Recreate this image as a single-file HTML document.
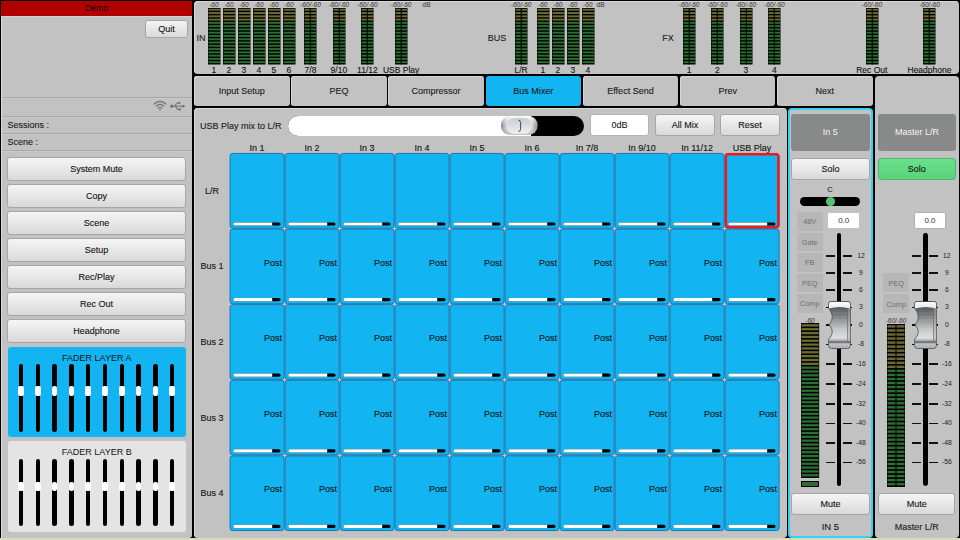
<!DOCTYPE html><html><head><meta charset="utf-8"><style>
*{margin:0;padding:0;box-sizing:border-box}
html,body{width:960px;height:540px;overflow:hidden;background:#000;font-family:"Liberation Sans", sans-serif;position:relative}
div{position:absolute}
svg{position:absolute}
.t{white-space:nowrap}
.btn{border:1px solid #a6a6a6;border-radius:3px;background:linear-gradient(#f5f5f5,#d9d9d9);text-align:center;color:#141414;white-space:nowrap;-webkit-text-stroke:0.12px #141414}
.tab{background:#c2c2c2;border-radius:3px;text-align:center;color:#1e1e1e;font-size:9px;box-shadow:inset 1px 1px 0 #d6d6d6;-webkit-text-stroke:0.12px #141414}
.cell{background:#13b4f2;border:1px solid #1a8fc4;border-radius:3px}
.bar{height:3.2px;border-radius:1.6px;background:linear-gradient(90deg,#fff 0,#fff 81%,#000 81%)}
.ml{font-size:6.5px;color:#333;text-align:center;white-space:nowrap;font-style:italic}
.lab{font-size:9px;color:#141414;text-align:center;white-space:nowrap;-webkit-text-stroke:0.12px #141414}
.sk{-webkit-text-stroke:0.05px currentColor}
</style></head><body>
<div style="left:0px;top:538px;width:960px;height:2px;background:#d9dcb9"></div>
<div style="left:1px;top:1px;width:191px;height:537px;background:#c2c2c2;box-shadow:inset 1px 0 0 #dadada;border-radius:0 0 3px 0"></div>
<div style="left:1px;top:1px;width:191px;height:15px;background:#b00000"></div>
<div class="t" style="left:1px;top:1px;width:191px;height:15px;line-height:15px;font-size:8.7px;color:#100000;text-align:center;">Demo</div>
<div style="left:1px;top:16px;width:191px;height:1px;background:#d2d2d2"></div>
<div class="btn" style="left:145px;top:19.5px;width:43px;height:18px;line-height:17px;font-size:9px;">Quit</div>
<div style="left:2px;top:97px;width:190px;height:1px;background:#a9a9a9"></div>
<div style="left:2px;top:98px;width:190px;height:1px;background:#cacaca"></div>
<div style="left:2px;top:116px;width:190px;height:1px;background:#a9a9a9"></div>
<div style="left:2px;top:117px;width:190px;height:1px;background:#cacaca"></div>
<div style="left:2px;top:133px;width:190px;height:1px;background:#a9a9a9"></div>
<div style="left:2px;top:134px;width:190px;height:1px;background:#cacaca"></div>
<div style="left:2px;top:150px;width:190px;height:1px;background:#a9a9a9"></div>
<div style="left:2px;top:151px;width:190px;height:1px;background:#cacaca"></div>
<svg style="left:150px;top:99px" width="40" height="14" viewBox="0 0 40 14">
<g fill="none" stroke="#777" stroke-linecap="round">
<path d="M4.2 5 A8 8 0 0 1 15.8 5" stroke-width="1.4"/>
<path d="M6.3 7.1 A5 5 0 0 1 13.7 7.1" stroke-width="1.4"/>
<path d="M8.2 9.1 A2.5 2.5 0 0 1 11.8 9.1" stroke-width="1.4"/>
</g>
<path d="M8.9 10.6 L11.1 10.6 L10 12.3 Z" fill="#777"/>
<g fill="#777" stroke="#777" transform="translate(0,-0.8)">
<circle cx="21.8" cy="8" r="1.7" stroke="none"/>
<path d="M22 8 H33.5" stroke-width="1.1" fill="none"/>
<path d="M35.5 8 L32.3 6.2 L32.3 9.8 Z" stroke="none"/>
<path d="M24.5 8 L27 4.8 H28.5" stroke-width="1.1" fill="none"/>
<circle cx="29.3" cy="4.7" r="1.2" stroke="none"/>
<path d="M25.5 8 L27.5 11.2 H29" stroke-width="1.1" fill="none"/>
<rect x="28.7" y="10.1" width="2.3" height="2.3" stroke="none"/>
</g>
</svg>
<div class="t" style="left:7.5px;top:117px;width:150px;height:16px;line-height:16px;font-size:9px;color:#222;text-align:left;-webkit-text-stroke:0.12px #141414">Sessions :</div>
<div class="t" style="left:7.5px;top:134px;width:150px;height:16px;line-height:16px;font-size:9px;color:#222;text-align:left;-webkit-text-stroke:0.12px #141414">Scene :</div>
<div class="btn" style="left:7.2px;top:157px;width:178.8px;height:23.5px;line-height:22.5px;font-size:9px;">System Mute</div>
<div class="btn" style="left:7.2px;top:184px;width:178.8px;height:23.5px;line-height:22.5px;font-size:9px;">Copy</div>
<div class="btn" style="left:7.2px;top:211px;width:178.8px;height:23.5px;line-height:22.5px;font-size:9px;">Scene</div>
<div class="btn" style="left:7.2px;top:238px;width:178.8px;height:23.5px;line-height:22.5px;font-size:9px;">Setup</div>
<div class="btn" style="left:7.2px;top:265px;width:178.8px;height:23.5px;line-height:22.5px;font-size:9px;">Rec/Play</div>
<div class="btn" style="left:7.2px;top:292px;width:178.8px;height:23.5px;line-height:22.5px;font-size:9px;">Rec Out</div>
<div class="btn" style="left:7.2px;top:319px;width:178.8px;height:23.5px;line-height:22.5px;font-size:9px;">Headphone</div>
<div style="left:7.5px;top:346.5px;width:178.5px;height:90.5px;background:#13b4f2;border-radius:3px"></div><div class="t" style="left:7.5px;top:352.5px;width:178.5px;height:10px;line-height:10px;font-size:9px;color:#151515;text-align:center;">FADER LAYER A</div><div style="left:18.7px;top:364px;width:4.6px;height:67.60000000000002px;background:#000;border-radius:2.3px"></div><div style="left:18.1px;top:386.4px;width:5.8px;height:9.600000000000023px;background:#fff;border-radius:2px"></div><div style="left:35.5px;top:364px;width:4.6px;height:67.60000000000002px;background:#000;border-radius:2.3px"></div><div style="left:34.9px;top:386.4px;width:5.8px;height:9.600000000000023px;background:#fff;border-radius:2px"></div><div style="left:52.300000000000004px;top:364px;width:4.6px;height:67.60000000000002px;background:#000;border-radius:2.3px"></div><div style="left:51.7px;top:386.4px;width:5.8px;height:9.600000000000023px;background:#fff;border-radius:2px"></div><div style="left:69.10000000000001px;top:364px;width:4.6px;height:67.60000000000002px;background:#000;border-radius:2.3px"></div><div style="left:68.5px;top:386.4px;width:5.8px;height:9.600000000000023px;background:#fff;border-radius:2px"></div><div style="left:85.9px;top:364px;width:4.6px;height:67.60000000000002px;background:#000;border-radius:2.3px"></div><div style="left:85.3px;top:386.4px;width:5.8px;height:9.600000000000023px;background:#fff;border-radius:2px"></div><div style="left:102.7px;top:364px;width:4.6px;height:67.60000000000002px;background:#000;border-radius:2.3px"></div><div style="left:102.1px;top:386.4px;width:5.8px;height:9.600000000000023px;background:#fff;border-radius:2px"></div><div style="left:119.50000000000001px;top:364px;width:4.6px;height:67.60000000000002px;background:#000;border-radius:2.3px"></div><div style="left:118.9px;top:386.4px;width:5.8px;height:9.600000000000023px;background:#fff;border-radius:2px"></div><div style="left:136.3px;top:364px;width:4.6px;height:67.60000000000002px;background:#000;border-radius:2.3px"></div><div style="left:135.70000000000002px;top:386.4px;width:5.8px;height:9.600000000000023px;background:#fff;border-radius:2px"></div><div style="left:153.1px;top:364px;width:4.6px;height:67.60000000000002px;background:#000;border-radius:2.3px"></div><div style="left:152.5px;top:386.4px;width:5.8px;height:9.600000000000023px;background:#fff;border-radius:2px"></div><div style="left:169.9px;top:364px;width:4.6px;height:67.60000000000002px;background:#000;border-radius:2.3px"></div><div style="left:169.3px;top:386.4px;width:5.8px;height:9.600000000000023px;background:#fff;border-radius:2px"></div>
<div style="left:7.5px;top:441px;width:178.5px;height:91px;background:#e4e4e4;border-radius:3px"></div><div class="t" style="left:7.5px;top:447px;width:178.5px;height:10px;line-height:10px;font-size:9px;color:#151515;text-align:center;">FADER LAYER B</div><div style="left:18.7px;top:458.5px;width:4.6px;height:67.20000000000005px;background:#000;border-radius:2.3px"></div><div style="left:18.1px;top:481.8px;width:5.8px;height:8.899999999999977px;background:#fff;border-radius:2px"></div><div style="left:35.5px;top:458.5px;width:4.6px;height:67.20000000000005px;background:#000;border-radius:2.3px"></div><div style="left:34.9px;top:481.8px;width:5.8px;height:8.899999999999977px;background:#fff;border-radius:2px"></div><div style="left:52.300000000000004px;top:458.5px;width:4.6px;height:67.20000000000005px;background:#000;border-radius:2.3px"></div><div style="left:51.7px;top:481.8px;width:5.8px;height:8.899999999999977px;background:#fff;border-radius:2px"></div><div style="left:69.10000000000001px;top:458.5px;width:4.6px;height:67.20000000000005px;background:#000;border-radius:2.3px"></div><div style="left:68.5px;top:481.8px;width:5.8px;height:8.899999999999977px;background:#fff;border-radius:2px"></div><div style="left:85.9px;top:458.5px;width:4.6px;height:67.20000000000005px;background:#000;border-radius:2.3px"></div><div style="left:85.3px;top:481.8px;width:5.8px;height:8.899999999999977px;background:#fff;border-radius:2px"></div><div style="left:102.7px;top:458.5px;width:4.6px;height:67.20000000000005px;background:#000;border-radius:2.3px"></div><div style="left:102.1px;top:481.8px;width:5.8px;height:8.899999999999977px;background:#fff;border-radius:2px"></div><div style="left:119.50000000000001px;top:458.5px;width:4.6px;height:67.20000000000005px;background:#000;border-radius:2.3px"></div><div style="left:118.9px;top:481.8px;width:5.8px;height:8.899999999999977px;background:#fff;border-radius:2px"></div><div style="left:136.3px;top:458.5px;width:4.6px;height:67.20000000000005px;background:#000;border-radius:2.3px"></div><div style="left:135.70000000000002px;top:481.8px;width:5.8px;height:8.899999999999977px;background:#fff;border-radius:2px"></div><div style="left:153.1px;top:458.5px;width:4.6px;height:67.20000000000005px;background:#000;border-radius:2.3px"></div><div style="left:152.5px;top:481.8px;width:5.8px;height:8.899999999999977px;background:#fff;border-radius:2px"></div><div style="left:169.9px;top:458.5px;width:4.6px;height:67.20000000000005px;background:#000;border-radius:2.3px"></div><div style="left:169.3px;top:481.8px;width:5.8px;height:8.899999999999977px;background:#fff;border-radius:2px"></div>
<div style="left:194px;top:1px;width:764.6px;height:73.3px;background:#c2c2c2;border-radius:4px;box-shadow:inset 1px 1px 0 #d8d8d8"></div>
<svg style="left:207.8px;top:8px" width="13.5" height="57.5" viewBox="0 0 13.5 57.5"><rect x="0" y="0" width="12.50" height="56.50" fill="#000"/><rect x="0.5" y="0.80" width="11.50" height="1.90" fill="#6c6b32"/><rect x="0.5" y="4.08" width="11.50" height="1.90" fill="#6c6b32"/><rect x="0.5" y="7.35" width="11.50" height="1.90" fill="#6c6b32"/><rect x="0.5" y="10.63" width="11.50" height="1.90" fill="#6c6b32"/><rect x="0.5" y="13.91" width="11.50" height="1.90" fill="#2b6e31"/><rect x="0.5" y="17.18" width="11.50" height="1.90" fill="#2b6e31"/><rect x="0.5" y="20.46" width="11.50" height="1.90" fill="#2b6e31"/><rect x="0.5" y="23.74" width="11.50" height="1.90" fill="#2b6e31"/><rect x="0.5" y="27.01" width="11.50" height="1.90" fill="#2b6e31"/><rect x="0.5" y="30.29" width="11.50" height="1.90" fill="#2b6e31"/><rect x="0.5" y="33.56" width="11.50" height="1.90" fill="#2b6e31"/><rect x="0.5" y="36.84" width="11.50" height="1.90" fill="#2b6e31"/><rect x="0.5" y="40.12" width="11.50" height="1.90" fill="#2b6e31"/><rect x="0.5" y="43.39" width="11.50" height="1.90" fill="#2b6e31"/><rect x="0.5" y="46.67" width="11.50" height="1.90" fill="#2b6e31"/><rect x="0.5" y="49.95" width="11.50" height="1.90" fill="#2b6e31"/><rect x="0.5" y="53.22" width="11.50" height="1.90" fill="#2b6e31"/></svg><div class="ml" style="left:192.8px;top:1px;width:42.2px;height:7px;line-height:7px">-60</div><div class="lab" style="left:187.8px;top:65px;width:52.2px;height:10px;line-height:10px;font-size:8.5px">1</div>
<svg style="left:222.8px;top:8px" width="13.5" height="57.5" viewBox="0 0 13.5 57.5"><rect x="0" y="0" width="12.50" height="56.50" fill="#000"/><rect x="0.5" y="0.80" width="11.50" height="1.90" fill="#6c6b32"/><rect x="0.5" y="4.08" width="11.50" height="1.90" fill="#6c6b32"/><rect x="0.5" y="7.35" width="11.50" height="1.90" fill="#6c6b32"/><rect x="0.5" y="10.63" width="11.50" height="1.90" fill="#6c6b32"/><rect x="0.5" y="13.91" width="11.50" height="1.90" fill="#2b6e31"/><rect x="0.5" y="17.18" width="11.50" height="1.90" fill="#2b6e31"/><rect x="0.5" y="20.46" width="11.50" height="1.90" fill="#2b6e31"/><rect x="0.5" y="23.74" width="11.50" height="1.90" fill="#2b6e31"/><rect x="0.5" y="27.01" width="11.50" height="1.90" fill="#2b6e31"/><rect x="0.5" y="30.29" width="11.50" height="1.90" fill="#2b6e31"/><rect x="0.5" y="33.56" width="11.50" height="1.90" fill="#2b6e31"/><rect x="0.5" y="36.84" width="11.50" height="1.90" fill="#2b6e31"/><rect x="0.5" y="40.12" width="11.50" height="1.90" fill="#2b6e31"/><rect x="0.5" y="43.39" width="11.50" height="1.90" fill="#2b6e31"/><rect x="0.5" y="46.67" width="11.50" height="1.90" fill="#2b6e31"/><rect x="0.5" y="49.95" width="11.50" height="1.90" fill="#2b6e31"/><rect x="0.5" y="53.22" width="11.50" height="1.90" fill="#2b6e31"/></svg><div class="ml" style="left:207.8px;top:1px;width:42.2px;height:7px;line-height:7px">-60</div><div class="lab" style="left:202.8px;top:65px;width:52.2px;height:10px;line-height:10px;font-size:8.5px">2</div>
<svg style="left:237.8px;top:8px" width="13.5" height="57.5" viewBox="0 0 13.5 57.5"><rect x="0" y="0" width="12.50" height="56.50" fill="#000"/><rect x="0.5" y="0.80" width="11.50" height="1.90" fill="#6c6b32"/><rect x="0.5" y="4.08" width="11.50" height="1.90" fill="#6c6b32"/><rect x="0.5" y="7.35" width="11.50" height="1.90" fill="#6c6b32"/><rect x="0.5" y="10.63" width="11.50" height="1.90" fill="#6c6b32"/><rect x="0.5" y="13.91" width="11.50" height="1.90" fill="#2b6e31"/><rect x="0.5" y="17.18" width="11.50" height="1.90" fill="#2b6e31"/><rect x="0.5" y="20.46" width="11.50" height="1.90" fill="#2b6e31"/><rect x="0.5" y="23.74" width="11.50" height="1.90" fill="#2b6e31"/><rect x="0.5" y="27.01" width="11.50" height="1.90" fill="#2b6e31"/><rect x="0.5" y="30.29" width="11.50" height="1.90" fill="#2b6e31"/><rect x="0.5" y="33.56" width="11.50" height="1.90" fill="#2b6e31"/><rect x="0.5" y="36.84" width="11.50" height="1.90" fill="#2b6e31"/><rect x="0.5" y="40.12" width="11.50" height="1.90" fill="#2b6e31"/><rect x="0.5" y="43.39" width="11.50" height="1.90" fill="#2b6e31"/><rect x="0.5" y="46.67" width="11.50" height="1.90" fill="#2b6e31"/><rect x="0.5" y="49.95" width="11.50" height="1.90" fill="#2b6e31"/><rect x="0.5" y="53.22" width="11.50" height="1.90" fill="#2b6e31"/></svg><div class="ml" style="left:222.8px;top:1px;width:42.2px;height:7px;line-height:7px">-60</div><div class="lab" style="left:217.8px;top:65px;width:52.2px;height:10px;line-height:10px;font-size:8.5px">3</div>
<svg style="left:252.8px;top:8px" width="13.5" height="57.5" viewBox="0 0 13.5 57.5"><rect x="0" y="0" width="12.50" height="56.50" fill="#000"/><rect x="0.5" y="0.80" width="11.50" height="1.90" fill="#6c6b32"/><rect x="0.5" y="4.08" width="11.50" height="1.90" fill="#6c6b32"/><rect x="0.5" y="7.35" width="11.50" height="1.90" fill="#6c6b32"/><rect x="0.5" y="10.63" width="11.50" height="1.90" fill="#6c6b32"/><rect x="0.5" y="13.91" width="11.50" height="1.90" fill="#2b6e31"/><rect x="0.5" y="17.18" width="11.50" height="1.90" fill="#2b6e31"/><rect x="0.5" y="20.46" width="11.50" height="1.90" fill="#2b6e31"/><rect x="0.5" y="23.74" width="11.50" height="1.90" fill="#2b6e31"/><rect x="0.5" y="27.01" width="11.50" height="1.90" fill="#2b6e31"/><rect x="0.5" y="30.29" width="11.50" height="1.90" fill="#2b6e31"/><rect x="0.5" y="33.56" width="11.50" height="1.90" fill="#2b6e31"/><rect x="0.5" y="36.84" width="11.50" height="1.90" fill="#2b6e31"/><rect x="0.5" y="40.12" width="11.50" height="1.90" fill="#2b6e31"/><rect x="0.5" y="43.39" width="11.50" height="1.90" fill="#2b6e31"/><rect x="0.5" y="46.67" width="11.50" height="1.90" fill="#2b6e31"/><rect x="0.5" y="49.95" width="11.50" height="1.90" fill="#2b6e31"/><rect x="0.5" y="53.22" width="11.50" height="1.90" fill="#2b6e31"/></svg><div class="ml" style="left:237.8px;top:1px;width:42.2px;height:7px;line-height:7px">-60</div><div class="lab" style="left:232.8px;top:65px;width:52.2px;height:10px;line-height:10px;font-size:8.5px">4</div>
<svg style="left:267.8px;top:8px" width="13.5" height="57.5" viewBox="0 0 13.5 57.5"><rect x="0" y="0" width="12.50" height="56.50" fill="#000"/><rect x="0.5" y="0.80" width="11.50" height="1.90" fill="#6c6b32"/><rect x="0.5" y="4.08" width="11.50" height="1.90" fill="#6c6b32"/><rect x="0.5" y="7.35" width="11.50" height="1.90" fill="#6c6b32"/><rect x="0.5" y="10.63" width="11.50" height="1.90" fill="#6c6b32"/><rect x="0.5" y="13.91" width="11.50" height="1.90" fill="#2b6e31"/><rect x="0.5" y="17.18" width="11.50" height="1.90" fill="#2b6e31"/><rect x="0.5" y="20.46" width="11.50" height="1.90" fill="#2b6e31"/><rect x="0.5" y="23.74" width="11.50" height="1.90" fill="#2b6e31"/><rect x="0.5" y="27.01" width="11.50" height="1.90" fill="#2b6e31"/><rect x="0.5" y="30.29" width="11.50" height="1.90" fill="#2b6e31"/><rect x="0.5" y="33.56" width="11.50" height="1.90" fill="#2b6e31"/><rect x="0.5" y="36.84" width="11.50" height="1.90" fill="#2b6e31"/><rect x="0.5" y="40.12" width="11.50" height="1.90" fill="#2b6e31"/><rect x="0.5" y="43.39" width="11.50" height="1.90" fill="#2b6e31"/><rect x="0.5" y="46.67" width="11.50" height="1.90" fill="#2b6e31"/><rect x="0.5" y="49.95" width="11.50" height="1.90" fill="#2b6e31"/><rect x="0.5" y="53.22" width="11.50" height="1.90" fill="#2b6e31"/></svg><div class="ml" style="left:252.8px;top:1px;width:42.2px;height:7px;line-height:7px">-60</div><div class="lab" style="left:247.8px;top:65px;width:52.2px;height:10px;line-height:10px;font-size:8.5px">5</div>
<svg style="left:282.8px;top:8px" width="13.5" height="57.5" viewBox="0 0 13.5 57.5"><rect x="0" y="0" width="12.50" height="56.50" fill="#000"/><rect x="0.5" y="0.80" width="11.50" height="1.90" fill="#6c6b32"/><rect x="0.5" y="4.08" width="11.50" height="1.90" fill="#6c6b32"/><rect x="0.5" y="7.35" width="11.50" height="1.90" fill="#6c6b32"/><rect x="0.5" y="10.63" width="11.50" height="1.90" fill="#6c6b32"/><rect x="0.5" y="13.91" width="11.50" height="1.90" fill="#2b6e31"/><rect x="0.5" y="17.18" width="11.50" height="1.90" fill="#2b6e31"/><rect x="0.5" y="20.46" width="11.50" height="1.90" fill="#2b6e31"/><rect x="0.5" y="23.74" width="11.50" height="1.90" fill="#2b6e31"/><rect x="0.5" y="27.01" width="11.50" height="1.90" fill="#2b6e31"/><rect x="0.5" y="30.29" width="11.50" height="1.90" fill="#2b6e31"/><rect x="0.5" y="33.56" width="11.50" height="1.90" fill="#2b6e31"/><rect x="0.5" y="36.84" width="11.50" height="1.90" fill="#2b6e31"/><rect x="0.5" y="40.12" width="11.50" height="1.90" fill="#2b6e31"/><rect x="0.5" y="43.39" width="11.50" height="1.90" fill="#2b6e31"/><rect x="0.5" y="46.67" width="11.50" height="1.90" fill="#2b6e31"/><rect x="0.5" y="49.95" width="11.50" height="1.90" fill="#2b6e31"/><rect x="0.5" y="53.22" width="11.50" height="1.90" fill="#2b6e31"/></svg><div class="ml" style="left:267.8px;top:1px;width:42.2px;height:7px;line-height:7px">-60</div><div class="lab" style="left:262.8px;top:65px;width:52.2px;height:10px;line-height:10px;font-size:8.5px">6</div>
<svg style="left:304.4px;top:8px" width="13.5" height="57.5" viewBox="0 0 13.5 57.5"><rect x="0" y="0" width="12.50" height="56.50" fill="#000"/><rect x="0.5" y="0.80" width="11.50" height="1.90" fill="#6c6b32"/><rect x="0.5" y="4.08" width="11.50" height="1.90" fill="#6c6b32"/><rect x="0.5" y="7.35" width="11.50" height="1.90" fill="#6c6b32"/><rect x="0.5" y="10.63" width="11.50" height="1.90" fill="#6c6b32"/><rect x="0.5" y="13.91" width="11.50" height="1.90" fill="#2b6e31"/><rect x="0.5" y="17.18" width="11.50" height="1.90" fill="#2b6e31"/><rect x="0.5" y="20.46" width="11.50" height="1.90" fill="#2b6e31"/><rect x="0.5" y="23.74" width="11.50" height="1.90" fill="#2b6e31"/><rect x="0.5" y="27.01" width="11.50" height="1.90" fill="#2b6e31"/><rect x="0.5" y="30.29" width="11.50" height="1.90" fill="#2b6e31"/><rect x="0.5" y="33.56" width="11.50" height="1.90" fill="#2b6e31"/><rect x="0.5" y="36.84" width="11.50" height="1.90" fill="#2b6e31"/><rect x="0.5" y="40.12" width="11.50" height="1.90" fill="#2b6e31"/><rect x="0.5" y="43.39" width="11.50" height="1.90" fill="#2b6e31"/><rect x="0.5" y="46.67" width="11.50" height="1.90" fill="#2b6e31"/><rect x="0.5" y="49.95" width="11.50" height="1.90" fill="#2b6e31"/><rect x="0.5" y="53.22" width="11.50" height="1.90" fill="#2b6e31"/><rect x="5.75" y="0" width="1" height="56.50" fill="#000"/></svg><div class="ml" style="left:289.4px;top:1px;width:42.2px;height:7px;line-height:7px">-60/-60</div><div class="lab" style="left:284.4px;top:65px;width:52.2px;height:10px;line-height:10px;font-size:8.5px">7/8</div>
<svg style="left:332.8px;top:8px" width="13.5" height="57.5" viewBox="0 0 13.5 57.5"><rect x="0" y="0" width="12.50" height="56.50" fill="#000"/><rect x="0.5" y="0.80" width="11.50" height="1.90" fill="#6c6b32"/><rect x="0.5" y="4.08" width="11.50" height="1.90" fill="#6c6b32"/><rect x="0.5" y="7.35" width="11.50" height="1.90" fill="#6c6b32"/><rect x="0.5" y="10.63" width="11.50" height="1.90" fill="#6c6b32"/><rect x="0.5" y="13.91" width="11.50" height="1.90" fill="#2b6e31"/><rect x="0.5" y="17.18" width="11.50" height="1.90" fill="#2b6e31"/><rect x="0.5" y="20.46" width="11.50" height="1.90" fill="#2b6e31"/><rect x="0.5" y="23.74" width="11.50" height="1.90" fill="#2b6e31"/><rect x="0.5" y="27.01" width="11.50" height="1.90" fill="#2b6e31"/><rect x="0.5" y="30.29" width="11.50" height="1.90" fill="#2b6e31"/><rect x="0.5" y="33.56" width="11.50" height="1.90" fill="#2b6e31"/><rect x="0.5" y="36.84" width="11.50" height="1.90" fill="#2b6e31"/><rect x="0.5" y="40.12" width="11.50" height="1.90" fill="#2b6e31"/><rect x="0.5" y="43.39" width="11.50" height="1.90" fill="#2b6e31"/><rect x="0.5" y="46.67" width="11.50" height="1.90" fill="#2b6e31"/><rect x="0.5" y="49.95" width="11.50" height="1.90" fill="#2b6e31"/><rect x="0.5" y="53.22" width="11.50" height="1.90" fill="#2b6e31"/><rect x="5.75" y="0" width="1" height="56.50" fill="#000"/></svg><div class="ml" style="left:317.8px;top:1px;width:42.2px;height:7px;line-height:7px">-60/-60</div><div class="lab" style="left:312.8px;top:65px;width:52.2px;height:10px;line-height:10px;font-size:8.5px">9/10</div>
<svg style="left:361.3px;top:8px" width="13.5" height="57.5" viewBox="0 0 13.5 57.5"><rect x="0" y="0" width="12.50" height="56.50" fill="#000"/><rect x="0.5" y="0.80" width="11.50" height="1.90" fill="#6c6b32"/><rect x="0.5" y="4.08" width="11.50" height="1.90" fill="#6c6b32"/><rect x="0.5" y="7.35" width="11.50" height="1.90" fill="#6c6b32"/><rect x="0.5" y="10.63" width="11.50" height="1.90" fill="#6c6b32"/><rect x="0.5" y="13.91" width="11.50" height="1.90" fill="#2b6e31"/><rect x="0.5" y="17.18" width="11.50" height="1.90" fill="#2b6e31"/><rect x="0.5" y="20.46" width="11.50" height="1.90" fill="#2b6e31"/><rect x="0.5" y="23.74" width="11.50" height="1.90" fill="#2b6e31"/><rect x="0.5" y="27.01" width="11.50" height="1.90" fill="#2b6e31"/><rect x="0.5" y="30.29" width="11.50" height="1.90" fill="#2b6e31"/><rect x="0.5" y="33.56" width="11.50" height="1.90" fill="#2b6e31"/><rect x="0.5" y="36.84" width="11.50" height="1.90" fill="#2b6e31"/><rect x="0.5" y="40.12" width="11.50" height="1.90" fill="#2b6e31"/><rect x="0.5" y="43.39" width="11.50" height="1.90" fill="#2b6e31"/><rect x="0.5" y="46.67" width="11.50" height="1.90" fill="#2b6e31"/><rect x="0.5" y="49.95" width="11.50" height="1.90" fill="#2b6e31"/><rect x="0.5" y="53.22" width="11.50" height="1.90" fill="#2b6e31"/><rect x="5.75" y="0" width="1" height="56.50" fill="#000"/></svg><div class="ml" style="left:346.3px;top:1px;width:42.2px;height:7px;line-height:7px">-60/-60</div><div class="lab" style="left:341.3px;top:65px;width:52.2px;height:10px;line-height:10px;font-size:8.5px">11/12</div>
<svg style="left:395px;top:8px" width="13.5" height="57.5" viewBox="0 0 13.5 57.5"><rect x="0" y="0" width="12.50" height="56.50" fill="#000"/><rect x="0.5" y="0.80" width="11.50" height="1.90" fill="#6c6b32"/><rect x="0.5" y="4.08" width="11.50" height="1.90" fill="#6c6b32"/><rect x="0.5" y="7.35" width="11.50" height="1.90" fill="#6c6b32"/><rect x="0.5" y="10.63" width="11.50" height="1.90" fill="#6c6b32"/><rect x="0.5" y="13.91" width="11.50" height="1.90" fill="#2b6e31"/><rect x="0.5" y="17.18" width="11.50" height="1.90" fill="#2b6e31"/><rect x="0.5" y="20.46" width="11.50" height="1.90" fill="#2b6e31"/><rect x="0.5" y="23.74" width="11.50" height="1.90" fill="#2b6e31"/><rect x="0.5" y="27.01" width="11.50" height="1.90" fill="#2b6e31"/><rect x="0.5" y="30.29" width="11.50" height="1.90" fill="#2b6e31"/><rect x="0.5" y="33.56" width="11.50" height="1.90" fill="#2b6e31"/><rect x="0.5" y="36.84" width="11.50" height="1.90" fill="#2b6e31"/><rect x="0.5" y="40.12" width="11.50" height="1.90" fill="#2b6e31"/><rect x="0.5" y="43.39" width="11.50" height="1.90" fill="#2b6e31"/><rect x="0.5" y="46.67" width="11.50" height="1.90" fill="#2b6e31"/><rect x="0.5" y="49.95" width="11.50" height="1.90" fill="#2b6e31"/><rect x="0.5" y="53.22" width="11.50" height="1.90" fill="#2b6e31"/><rect x="5.75" y="0" width="1" height="56.50" fill="#000"/></svg><div class="ml" style="left:380px;top:1px;width:42.2px;height:7px;line-height:7px">-60/-60</div><div class="lab" style="left:375px;top:65px;width:52.2px;height:10px;line-height:10px;font-size:8.5px">USB Play</div>
<div class="t" style="left:419px;top:1px;width:15px;height:7px;line-height:7px;font-size:6.5px;color:#333;text-align:center;">dB</div>
<div class="t" style="left:194px;top:32px;width:14px;height:12px;line-height:12px;font-size:9px;color:#1e1e1e;text-align:center;-webkit-text-stroke:0.12px #141414">IN</div>
<div class="t" style="left:484px;top:32px;width:26px;height:12px;line-height:12px;font-size:9px;color:#1e1e1e;text-align:center;-webkit-text-stroke:0.12px #141414">BUS</div>
<svg style="left:515px;top:8px" width="13.5" height="57.5" viewBox="0 0 13.5 57.5"><rect x="0" y="0" width="12.50" height="56.50" fill="#000"/><rect x="0.5" y="0.80" width="11.50" height="1.90" fill="#6c6b32"/><rect x="0.5" y="4.08" width="11.50" height="1.90" fill="#6c6b32"/><rect x="0.5" y="7.35" width="11.50" height="1.90" fill="#6c6b32"/><rect x="0.5" y="10.63" width="11.50" height="1.90" fill="#6c6b32"/><rect x="0.5" y="13.91" width="11.50" height="1.90" fill="#2b6e31"/><rect x="0.5" y="17.18" width="11.50" height="1.90" fill="#2b6e31"/><rect x="0.5" y="20.46" width="11.50" height="1.90" fill="#2b6e31"/><rect x="0.5" y="23.74" width="11.50" height="1.90" fill="#2b6e31"/><rect x="0.5" y="27.01" width="11.50" height="1.90" fill="#2b6e31"/><rect x="0.5" y="30.29" width="11.50" height="1.90" fill="#2b6e31"/><rect x="0.5" y="33.56" width="11.50" height="1.90" fill="#2b6e31"/><rect x="0.5" y="36.84" width="11.50" height="1.90" fill="#2b6e31"/><rect x="0.5" y="40.12" width="11.50" height="1.90" fill="#2b6e31"/><rect x="0.5" y="43.39" width="11.50" height="1.90" fill="#2b6e31"/><rect x="0.5" y="46.67" width="11.50" height="1.90" fill="#2b6e31"/><rect x="0.5" y="49.95" width="11.50" height="1.90" fill="#2b6e31"/><rect x="0.5" y="53.22" width="11.50" height="1.90" fill="#2b6e31"/><rect x="5.75" y="0" width="1" height="56.50" fill="#000"/></svg><div class="ml" style="left:500px;top:1px;width:42.2px;height:7px;line-height:7px">-60/-60</div><div class="lab" style="left:495px;top:65px;width:52.2px;height:10px;line-height:10px;font-size:8.5px">L/R</div>
<svg style="left:536.7px;top:8px" width="13.5" height="57.5" viewBox="0 0 13.5 57.5"><rect x="0" y="0" width="12.50" height="56.50" fill="#000"/><rect x="0.5" y="0.80" width="11.50" height="1.90" fill="#6c6b32"/><rect x="0.5" y="4.08" width="11.50" height="1.90" fill="#6c6b32"/><rect x="0.5" y="7.35" width="11.50" height="1.90" fill="#6c6b32"/><rect x="0.5" y="10.63" width="11.50" height="1.90" fill="#6c6b32"/><rect x="0.5" y="13.91" width="11.50" height="1.90" fill="#2b6e31"/><rect x="0.5" y="17.18" width="11.50" height="1.90" fill="#2b6e31"/><rect x="0.5" y="20.46" width="11.50" height="1.90" fill="#2b6e31"/><rect x="0.5" y="23.74" width="11.50" height="1.90" fill="#2b6e31"/><rect x="0.5" y="27.01" width="11.50" height="1.90" fill="#2b6e31"/><rect x="0.5" y="30.29" width="11.50" height="1.90" fill="#2b6e31"/><rect x="0.5" y="33.56" width="11.50" height="1.90" fill="#2b6e31"/><rect x="0.5" y="36.84" width="11.50" height="1.90" fill="#2b6e31"/><rect x="0.5" y="40.12" width="11.50" height="1.90" fill="#2b6e31"/><rect x="0.5" y="43.39" width="11.50" height="1.90" fill="#2b6e31"/><rect x="0.5" y="46.67" width="11.50" height="1.90" fill="#2b6e31"/><rect x="0.5" y="49.95" width="11.50" height="1.90" fill="#2b6e31"/><rect x="0.5" y="53.22" width="11.50" height="1.90" fill="#2b6e31"/></svg><div class="ml" style="left:521.7px;top:1px;width:42.2px;height:7px;line-height:7px">-60</div><div class="lab" style="left:516.7px;top:65px;width:52.2px;height:10px;line-height:10px;font-size:8.5px">1</div>
<svg style="left:551.7px;top:8px" width="13.5" height="57.5" viewBox="0 0 13.5 57.5"><rect x="0" y="0" width="12.50" height="56.50" fill="#000"/><rect x="0.5" y="0.80" width="11.50" height="1.90" fill="#6c6b32"/><rect x="0.5" y="4.08" width="11.50" height="1.90" fill="#6c6b32"/><rect x="0.5" y="7.35" width="11.50" height="1.90" fill="#6c6b32"/><rect x="0.5" y="10.63" width="11.50" height="1.90" fill="#6c6b32"/><rect x="0.5" y="13.91" width="11.50" height="1.90" fill="#2b6e31"/><rect x="0.5" y="17.18" width="11.50" height="1.90" fill="#2b6e31"/><rect x="0.5" y="20.46" width="11.50" height="1.90" fill="#2b6e31"/><rect x="0.5" y="23.74" width="11.50" height="1.90" fill="#2b6e31"/><rect x="0.5" y="27.01" width="11.50" height="1.90" fill="#2b6e31"/><rect x="0.5" y="30.29" width="11.50" height="1.90" fill="#2b6e31"/><rect x="0.5" y="33.56" width="11.50" height="1.90" fill="#2b6e31"/><rect x="0.5" y="36.84" width="11.50" height="1.90" fill="#2b6e31"/><rect x="0.5" y="40.12" width="11.50" height="1.90" fill="#2b6e31"/><rect x="0.5" y="43.39" width="11.50" height="1.90" fill="#2b6e31"/><rect x="0.5" y="46.67" width="11.50" height="1.90" fill="#2b6e31"/><rect x="0.5" y="49.95" width="11.50" height="1.90" fill="#2b6e31"/><rect x="0.5" y="53.22" width="11.50" height="1.90" fill="#2b6e31"/></svg><div class="ml" style="left:536.7px;top:1px;width:42.2px;height:7px;line-height:7px">-60</div><div class="lab" style="left:531.7px;top:65px;width:52.2px;height:10px;line-height:10px;font-size:8.5px">2</div>
<svg style="left:566.7px;top:8px" width="13.5" height="57.5" viewBox="0 0 13.5 57.5"><rect x="0" y="0" width="12.50" height="56.50" fill="#000"/><rect x="0.5" y="0.80" width="11.50" height="1.90" fill="#6c6b32"/><rect x="0.5" y="4.08" width="11.50" height="1.90" fill="#6c6b32"/><rect x="0.5" y="7.35" width="11.50" height="1.90" fill="#6c6b32"/><rect x="0.5" y="10.63" width="11.50" height="1.90" fill="#6c6b32"/><rect x="0.5" y="13.91" width="11.50" height="1.90" fill="#2b6e31"/><rect x="0.5" y="17.18" width="11.50" height="1.90" fill="#2b6e31"/><rect x="0.5" y="20.46" width="11.50" height="1.90" fill="#2b6e31"/><rect x="0.5" y="23.74" width="11.50" height="1.90" fill="#2b6e31"/><rect x="0.5" y="27.01" width="11.50" height="1.90" fill="#2b6e31"/><rect x="0.5" y="30.29" width="11.50" height="1.90" fill="#2b6e31"/><rect x="0.5" y="33.56" width="11.50" height="1.90" fill="#2b6e31"/><rect x="0.5" y="36.84" width="11.50" height="1.90" fill="#2b6e31"/><rect x="0.5" y="40.12" width="11.50" height="1.90" fill="#2b6e31"/><rect x="0.5" y="43.39" width="11.50" height="1.90" fill="#2b6e31"/><rect x="0.5" y="46.67" width="11.50" height="1.90" fill="#2b6e31"/><rect x="0.5" y="49.95" width="11.50" height="1.90" fill="#2b6e31"/><rect x="0.5" y="53.22" width="11.50" height="1.90" fill="#2b6e31"/></svg><div class="ml" style="left:551.7px;top:1px;width:42.2px;height:7px;line-height:7px">-60</div><div class="lab" style="left:546.7px;top:65px;width:52.2px;height:10px;line-height:10px;font-size:8.5px">3</div>
<svg style="left:581.7px;top:8px" width="13.5" height="57.5" viewBox="0 0 13.5 57.5"><rect x="0" y="0" width="12.50" height="56.50" fill="#000"/><rect x="0.5" y="0.80" width="11.50" height="1.90" fill="#6c6b32"/><rect x="0.5" y="4.08" width="11.50" height="1.90" fill="#6c6b32"/><rect x="0.5" y="7.35" width="11.50" height="1.90" fill="#6c6b32"/><rect x="0.5" y="10.63" width="11.50" height="1.90" fill="#6c6b32"/><rect x="0.5" y="13.91" width="11.50" height="1.90" fill="#2b6e31"/><rect x="0.5" y="17.18" width="11.50" height="1.90" fill="#2b6e31"/><rect x="0.5" y="20.46" width="11.50" height="1.90" fill="#2b6e31"/><rect x="0.5" y="23.74" width="11.50" height="1.90" fill="#2b6e31"/><rect x="0.5" y="27.01" width="11.50" height="1.90" fill="#2b6e31"/><rect x="0.5" y="30.29" width="11.50" height="1.90" fill="#2b6e31"/><rect x="0.5" y="33.56" width="11.50" height="1.90" fill="#2b6e31"/><rect x="0.5" y="36.84" width="11.50" height="1.90" fill="#2b6e31"/><rect x="0.5" y="40.12" width="11.50" height="1.90" fill="#2b6e31"/><rect x="0.5" y="43.39" width="11.50" height="1.90" fill="#2b6e31"/><rect x="0.5" y="46.67" width="11.50" height="1.90" fill="#2b6e31"/><rect x="0.5" y="49.95" width="11.50" height="1.90" fill="#2b6e31"/><rect x="0.5" y="53.22" width="11.50" height="1.90" fill="#2b6e31"/></svg><div class="ml" style="left:566.7px;top:1px;width:42.2px;height:7px;line-height:7px">-60</div><div class="lab" style="left:561.7px;top:65px;width:52.2px;height:10px;line-height:10px;font-size:8.5px">4</div>
<div class="t" style="left:593px;top:1px;width:15px;height:7px;line-height:7px;font-size:6.5px;color:#333;text-align:center;">dB</div>
<div class="t" style="left:660px;top:32px;width:16px;height:12px;line-height:12px;font-size:9px;color:#1e1e1e;text-align:center;-webkit-text-stroke:0.12px #141414">FX</div>
<svg style="left:683px;top:8px" width="13.5" height="57.5" viewBox="0 0 13.5 57.5"><rect x="0" y="0" width="12.50" height="56.50" fill="#000"/><rect x="0.5" y="0.80" width="11.50" height="1.90" fill="#6c6b32"/><rect x="0.5" y="4.08" width="11.50" height="1.90" fill="#6c6b32"/><rect x="0.5" y="7.35" width="11.50" height="1.90" fill="#6c6b32"/><rect x="0.5" y="10.63" width="11.50" height="1.90" fill="#6c6b32"/><rect x="0.5" y="13.91" width="11.50" height="1.90" fill="#2b6e31"/><rect x="0.5" y="17.18" width="11.50" height="1.90" fill="#2b6e31"/><rect x="0.5" y="20.46" width="11.50" height="1.90" fill="#2b6e31"/><rect x="0.5" y="23.74" width="11.50" height="1.90" fill="#2b6e31"/><rect x="0.5" y="27.01" width="11.50" height="1.90" fill="#2b6e31"/><rect x="0.5" y="30.29" width="11.50" height="1.90" fill="#2b6e31"/><rect x="0.5" y="33.56" width="11.50" height="1.90" fill="#2b6e31"/><rect x="0.5" y="36.84" width="11.50" height="1.90" fill="#2b6e31"/><rect x="0.5" y="40.12" width="11.50" height="1.90" fill="#2b6e31"/><rect x="0.5" y="43.39" width="11.50" height="1.90" fill="#2b6e31"/><rect x="0.5" y="46.67" width="11.50" height="1.90" fill="#2b6e31"/><rect x="0.5" y="49.95" width="11.50" height="1.90" fill="#2b6e31"/><rect x="0.5" y="53.22" width="11.50" height="1.90" fill="#2b6e31"/><rect x="5.75" y="0" width="1" height="56.50" fill="#000"/></svg><div class="ml" style="left:668px;top:1px;width:42.2px;height:7px;line-height:7px">-60/-60</div><div class="lab" style="left:663px;top:65px;width:52.2px;height:10px;line-height:10px;font-size:8.5px">1</div>
<svg style="left:711.2px;top:8px" width="13.5" height="57.5" viewBox="0 0 13.5 57.5"><rect x="0" y="0" width="12.50" height="56.50" fill="#000"/><rect x="0.5" y="0.80" width="11.50" height="1.90" fill="#6c6b32"/><rect x="0.5" y="4.08" width="11.50" height="1.90" fill="#6c6b32"/><rect x="0.5" y="7.35" width="11.50" height="1.90" fill="#6c6b32"/><rect x="0.5" y="10.63" width="11.50" height="1.90" fill="#6c6b32"/><rect x="0.5" y="13.91" width="11.50" height="1.90" fill="#2b6e31"/><rect x="0.5" y="17.18" width="11.50" height="1.90" fill="#2b6e31"/><rect x="0.5" y="20.46" width="11.50" height="1.90" fill="#2b6e31"/><rect x="0.5" y="23.74" width="11.50" height="1.90" fill="#2b6e31"/><rect x="0.5" y="27.01" width="11.50" height="1.90" fill="#2b6e31"/><rect x="0.5" y="30.29" width="11.50" height="1.90" fill="#2b6e31"/><rect x="0.5" y="33.56" width="11.50" height="1.90" fill="#2b6e31"/><rect x="0.5" y="36.84" width="11.50" height="1.90" fill="#2b6e31"/><rect x="0.5" y="40.12" width="11.50" height="1.90" fill="#2b6e31"/><rect x="0.5" y="43.39" width="11.50" height="1.90" fill="#2b6e31"/><rect x="0.5" y="46.67" width="11.50" height="1.90" fill="#2b6e31"/><rect x="0.5" y="49.95" width="11.50" height="1.90" fill="#2b6e31"/><rect x="0.5" y="53.22" width="11.50" height="1.90" fill="#2b6e31"/><rect x="5.75" y="0" width="1" height="56.50" fill="#000"/></svg><div class="ml" style="left:696.2px;top:1px;width:42.2px;height:7px;line-height:7px">-60/-60</div><div class="lab" style="left:691.2px;top:65px;width:52.2px;height:10px;line-height:10px;font-size:8.5px">2</div>
<svg style="left:739.8px;top:8px" width="13.5" height="57.5" viewBox="0 0 13.5 57.5"><rect x="0" y="0" width="12.50" height="56.50" fill="#000"/><rect x="0.5" y="0.80" width="11.50" height="1.90" fill="#6c6b32"/><rect x="0.5" y="4.08" width="11.50" height="1.90" fill="#6c6b32"/><rect x="0.5" y="7.35" width="11.50" height="1.90" fill="#6c6b32"/><rect x="0.5" y="10.63" width="11.50" height="1.90" fill="#6c6b32"/><rect x="0.5" y="13.91" width="11.50" height="1.90" fill="#2b6e31"/><rect x="0.5" y="17.18" width="11.50" height="1.90" fill="#2b6e31"/><rect x="0.5" y="20.46" width="11.50" height="1.90" fill="#2b6e31"/><rect x="0.5" y="23.74" width="11.50" height="1.90" fill="#2b6e31"/><rect x="0.5" y="27.01" width="11.50" height="1.90" fill="#2b6e31"/><rect x="0.5" y="30.29" width="11.50" height="1.90" fill="#2b6e31"/><rect x="0.5" y="33.56" width="11.50" height="1.90" fill="#2b6e31"/><rect x="0.5" y="36.84" width="11.50" height="1.90" fill="#2b6e31"/><rect x="0.5" y="40.12" width="11.50" height="1.90" fill="#2b6e31"/><rect x="0.5" y="43.39" width="11.50" height="1.90" fill="#2b6e31"/><rect x="0.5" y="46.67" width="11.50" height="1.90" fill="#2b6e31"/><rect x="0.5" y="49.95" width="11.50" height="1.90" fill="#2b6e31"/><rect x="0.5" y="53.22" width="11.50" height="1.90" fill="#2b6e31"/><rect x="5.75" y="0" width="1" height="56.50" fill="#000"/></svg><div class="ml" style="left:724.8px;top:1px;width:42.2px;height:7px;line-height:7px">-60/-60</div><div class="lab" style="left:719.8px;top:65px;width:52.2px;height:10px;line-height:10px;font-size:8.5px">3</div>
<svg style="left:768.3px;top:8px" width="13.5" height="57.5" viewBox="0 0 13.5 57.5"><rect x="0" y="0" width="12.50" height="56.50" fill="#000"/><rect x="0.5" y="0.80" width="11.50" height="1.90" fill="#6c6b32"/><rect x="0.5" y="4.08" width="11.50" height="1.90" fill="#6c6b32"/><rect x="0.5" y="7.35" width="11.50" height="1.90" fill="#6c6b32"/><rect x="0.5" y="10.63" width="11.50" height="1.90" fill="#6c6b32"/><rect x="0.5" y="13.91" width="11.50" height="1.90" fill="#2b6e31"/><rect x="0.5" y="17.18" width="11.50" height="1.90" fill="#2b6e31"/><rect x="0.5" y="20.46" width="11.50" height="1.90" fill="#2b6e31"/><rect x="0.5" y="23.74" width="11.50" height="1.90" fill="#2b6e31"/><rect x="0.5" y="27.01" width="11.50" height="1.90" fill="#2b6e31"/><rect x="0.5" y="30.29" width="11.50" height="1.90" fill="#2b6e31"/><rect x="0.5" y="33.56" width="11.50" height="1.90" fill="#2b6e31"/><rect x="0.5" y="36.84" width="11.50" height="1.90" fill="#2b6e31"/><rect x="0.5" y="40.12" width="11.50" height="1.90" fill="#2b6e31"/><rect x="0.5" y="43.39" width="11.50" height="1.90" fill="#2b6e31"/><rect x="0.5" y="46.67" width="11.50" height="1.90" fill="#2b6e31"/><rect x="0.5" y="49.95" width="11.50" height="1.90" fill="#2b6e31"/><rect x="0.5" y="53.22" width="11.50" height="1.90" fill="#2b6e31"/><rect x="5.75" y="0" width="1" height="56.50" fill="#000"/></svg><div class="ml" style="left:753.3px;top:1px;width:42.2px;height:7px;line-height:7px">-60/-60</div><div class="lab" style="left:748.3px;top:65px;width:52.2px;height:10px;line-height:10px;font-size:8.5px">4</div>
<svg style="left:865.7px;top:8px" width="13.5" height="57.5" viewBox="0 0 13.5 57.5"><rect x="0" y="0" width="12.50" height="56.50" fill="#000"/><rect x="0.5" y="0.80" width="11.50" height="1.90" fill="#6c6b32"/><rect x="0.5" y="4.08" width="11.50" height="1.90" fill="#6c6b32"/><rect x="0.5" y="7.35" width="11.50" height="1.90" fill="#6c6b32"/><rect x="0.5" y="10.63" width="11.50" height="1.90" fill="#6c6b32"/><rect x="0.5" y="13.91" width="11.50" height="1.90" fill="#2b6e31"/><rect x="0.5" y="17.18" width="11.50" height="1.90" fill="#2b6e31"/><rect x="0.5" y="20.46" width="11.50" height="1.90" fill="#2b6e31"/><rect x="0.5" y="23.74" width="11.50" height="1.90" fill="#2b6e31"/><rect x="0.5" y="27.01" width="11.50" height="1.90" fill="#2b6e31"/><rect x="0.5" y="30.29" width="11.50" height="1.90" fill="#2b6e31"/><rect x="0.5" y="33.56" width="11.50" height="1.90" fill="#2b6e31"/><rect x="0.5" y="36.84" width="11.50" height="1.90" fill="#2b6e31"/><rect x="0.5" y="40.12" width="11.50" height="1.90" fill="#2b6e31"/><rect x="0.5" y="43.39" width="11.50" height="1.90" fill="#2b6e31"/><rect x="0.5" y="46.67" width="11.50" height="1.90" fill="#2b6e31"/><rect x="0.5" y="49.95" width="11.50" height="1.90" fill="#2b6e31"/><rect x="0.5" y="53.22" width="11.50" height="1.90" fill="#2b6e31"/><rect x="5.75" y="0" width="1" height="56.50" fill="#000"/></svg><div class="ml" style="left:850.7px;top:1px;width:42.2px;height:7px;line-height:7px">-60/-60</div><div class="lab" style="left:845.7px;top:65px;width:52.2px;height:10px;line-height:10px;font-size:8.5px">Rec Out</div>
<svg style="left:923.4px;top:8px" width="13.5" height="57.5" viewBox="0 0 13.5 57.5"><rect x="0" y="0" width="12.50" height="56.50" fill="#000"/><rect x="0.5" y="0.80" width="11.50" height="1.90" fill="#6c6b32"/><rect x="0.5" y="4.08" width="11.50" height="1.90" fill="#6c6b32"/><rect x="0.5" y="7.35" width="11.50" height="1.90" fill="#6c6b32"/><rect x="0.5" y="10.63" width="11.50" height="1.90" fill="#6c6b32"/><rect x="0.5" y="13.91" width="11.50" height="1.90" fill="#2b6e31"/><rect x="0.5" y="17.18" width="11.50" height="1.90" fill="#2b6e31"/><rect x="0.5" y="20.46" width="11.50" height="1.90" fill="#2b6e31"/><rect x="0.5" y="23.74" width="11.50" height="1.90" fill="#2b6e31"/><rect x="0.5" y="27.01" width="11.50" height="1.90" fill="#2b6e31"/><rect x="0.5" y="30.29" width="11.50" height="1.90" fill="#2b6e31"/><rect x="0.5" y="33.56" width="11.50" height="1.90" fill="#2b6e31"/><rect x="0.5" y="36.84" width="11.50" height="1.90" fill="#2b6e31"/><rect x="0.5" y="40.12" width="11.50" height="1.90" fill="#2b6e31"/><rect x="0.5" y="43.39" width="11.50" height="1.90" fill="#2b6e31"/><rect x="0.5" y="46.67" width="11.50" height="1.90" fill="#2b6e31"/><rect x="0.5" y="49.95" width="11.50" height="1.90" fill="#2b6e31"/><rect x="0.5" y="53.22" width="11.50" height="1.90" fill="#2b6e31"/><rect x="5.75" y="0" width="1" height="56.50" fill="#000"/></svg><div class="ml" style="left:908.4px;top:1px;width:42.2px;height:7px;line-height:7px">-60/-60</div><div class="lab" style="left:903.4px;top:65px;width:52.2px;height:10px;line-height:10px;font-size:8.5px">Headphone</div>
<div class="tab" style="left:194.00px;top:76px;width:95.6px;height:30px;line-height:30px">Input Setup</div>
<div class="tab" style="left:291.17px;top:76px;width:95.6px;height:30px;line-height:30px">PEQ</div>
<div class="tab" style="left:388.34px;top:76px;width:95.6px;height:30px;line-height:30px">Compressor</div>
<div class="tab" style="left:485.51px;top:76px;width:95.6px;height:30px;line-height:30px;background:#13b4f2;box-shadow:none">Bus Mixer</div>
<div class="tab" style="left:582.68px;top:76px;width:95.6px;height:30px;line-height:30px">Effect Send</div>
<div class="tab" style="left:679.85px;top:76px;width:95.6px;height:30px;line-height:30px">Prev</div>
<div class="tab" style="left:777.02px;top:76px;width:95.6px;height:30px;line-height:30px">Next</div>
<div style="left:194px;top:107.6px;width:592.5px;height:430px;background:#c2c2c2;border-radius:4px;box-shadow:inset 1px 1px 0 #d8d8d8"></div>
<div class="t" style="left:200px;top:116px;width:90px;height:20px;line-height:20px;font-size:9px;color:#1e1e1e;text-align:left;-webkit-text-stroke:0.12px #141414">USB Play mix to L/R</div>
<div style="left:287.8px;top:115.5px;width:296px;height:20px;background:#000;border-radius:10px"></div>
<div style="left:287.8px;top:115.5px;width:243px;height:20px;background:#fff;border-radius:10px 0 0 10px"></div>
<svg style="left:500px;top:115px" width="39" height="22" viewBox="0 0 39 22">
<defs><linearGradient id="kh" x1="0" y1="0" x2="1" y2="0"><stop offset="0" stop-color="#7f878e"/><stop offset="0.14" stop-color="#c9ced2"/><stop offset="0.3" stop-color="#f4f5f6"/><stop offset="0.7" stop-color="#f4f5f6"/><stop offset="0.86" stop-color="#c9ced2"/><stop offset="1" stop-color="#7f878e"/></linearGradient>
<linearGradient id="kv" x1="0" y1="0" x2="0" y2="1"><stop offset="0" stop-color="#ffffff" stop-opacity="0.6"/><stop offset="0.5" stop-color="#ffffff" stop-opacity="0"/><stop offset="1" stop-color="#5a6168" stop-opacity="0.35"/></linearGradient>
<linearGradient id="ki" x1="0" y1="0" x2="0" y2="1"><stop offset="0" stop-color="#c8cdd2"/><stop offset="1" stop-color="#eef0f2"/></linearGradient></defs>
<rect x="0.8" y="1" width="37" height="19" rx="9.5" fill="url(#kh)"/>
<rect x="0.8" y="1" width="37" height="19" rx="9.5" fill="url(#kv)"/>
<rect x="6.4" y="2.8" width="25.6" height="16" rx="8" fill="url(#ki)"/>
<path d="M18.4 5.2 Q20.6 5.2 20.6 7.4 V14.2 Q20.6 16.4 18.4 16.4" fill="none" stroke="#3c3c3c" stroke-width="0.9"/>
</svg>
<div class="sk" style="left:590px;top:114px;width:59px;height:22px;background:#fff;border:1px solid #b4b4b4;border-radius:3px;text-align:center;line-height:20.5px;font-size:9px;color:#111">0dB</div>
<div class="btn" style="left:655px;top:114px;width:60px;height:22px;line-height:21px;font-size:9px;">All Mix</div>
<div class="btn" style="left:720px;top:114px;width:60px;height:22px;line-height:21px;font-size:9px;">Reset</div>
<div class="lab" style="left:229.6px;top:142px;width:55.0px;height:12px;line-height:12px">In 1</div>
<div class="lab" style="left:284.6px;top:142px;width:55.0px;height:12px;line-height:12px">In 2</div>
<div class="lab" style="left:339.6px;top:142px;width:55.0px;height:12px;line-height:12px">In 3</div>
<div class="lab" style="left:394.6px;top:142px;width:55.0px;height:12px;line-height:12px">In 4</div>
<div class="lab" style="left:449.6px;top:142px;width:55.0px;height:12px;line-height:12px">In 5</div>
<div class="lab" style="left:504.6px;top:142px;width:55.0px;height:12px;line-height:12px">In 6</div>
<div class="lab" style="left:559.6px;top:142px;width:55.0px;height:12px;line-height:12px">In 7/8</div>
<div class="lab" style="left:614.6px;top:142px;width:55.0px;height:12px;line-height:12px">In 9/10</div>
<div class="lab" style="left:669.6px;top:142px;width:55.0px;height:12px;line-height:12px">In 11/12</div>
<div class="lab" style="left:724.6px;top:142px;width:55.0px;height:12px;line-height:12px">USB Play</div>
<svg style="left:0px;top:0px" width="960" height="540" viewBox="0 0 960 540"><rect x="230.05" y="153.45" width="54.10" height="74.70" rx="2.6" fill="#13b4f2" stroke="#176fa8" stroke-width="0.9"/><rect x="233.30" y="222.40" width="47.2" height="3.2" rx="1.6" fill="#000"/><path d="M234.90 222.40 H272.20 V225.60 H234.90 A1.6 1.6 0 0 1 234.90 222.40 Z" fill="#fff"/><rect x="285.05" y="153.45" width="54.10" height="74.70" rx="2.6" fill="#13b4f2" stroke="#176fa8" stroke-width="0.9"/><rect x="288.30" y="222.40" width="47.2" height="3.2" rx="1.6" fill="#000"/><path d="M289.90 222.40 H327.20 V225.60 H289.90 A1.6 1.6 0 0 1 289.90 222.40 Z" fill="#fff"/><rect x="340.05" y="153.45" width="54.10" height="74.70" rx="2.6" fill="#13b4f2" stroke="#176fa8" stroke-width="0.9"/><rect x="343.30" y="222.40" width="47.2" height="3.2" rx="1.6" fill="#000"/><path d="M344.90 222.40 H382.20 V225.60 H344.90 A1.6 1.6 0 0 1 344.90 222.40 Z" fill="#fff"/><rect x="395.05" y="153.45" width="54.10" height="74.70" rx="2.6" fill="#13b4f2" stroke="#176fa8" stroke-width="0.9"/><rect x="398.30" y="222.40" width="47.2" height="3.2" rx="1.6" fill="#000"/><path d="M399.90 222.40 H437.20 V225.60 H399.90 A1.6 1.6 0 0 1 399.90 222.40 Z" fill="#fff"/><rect x="450.05" y="153.45" width="54.10" height="74.70" rx="2.6" fill="#13b4f2" stroke="#176fa8" stroke-width="0.9"/><rect x="453.30" y="222.40" width="47.2" height="3.2" rx="1.6" fill="#000"/><path d="M454.90 222.40 H492.20 V225.60 H454.90 A1.6 1.6 0 0 1 454.90 222.40 Z" fill="#fff"/><rect x="505.05" y="153.45" width="54.10" height="74.70" rx="2.6" fill="#13b4f2" stroke="#176fa8" stroke-width="0.9"/><rect x="508.30" y="222.40" width="47.2" height="3.2" rx="1.6" fill="#000"/><path d="M509.90 222.40 H547.20 V225.60 H509.90 A1.6 1.6 0 0 1 509.90 222.40 Z" fill="#fff"/><rect x="560.05" y="153.45" width="54.10" height="74.70" rx="2.6" fill="#13b4f2" stroke="#176fa8" stroke-width="0.9"/><rect x="563.30" y="222.40" width="47.2" height="3.2" rx="1.6" fill="#000"/><path d="M564.90 222.40 H602.20 V225.60 H564.90 A1.6 1.6 0 0 1 564.90 222.40 Z" fill="#fff"/><rect x="615.05" y="153.45" width="54.10" height="74.70" rx="2.6" fill="#13b4f2" stroke="#176fa8" stroke-width="0.9"/><rect x="618.30" y="222.40" width="47.2" height="3.2" rx="1.6" fill="#000"/><path d="M619.90 222.40 H657.20 V225.60 H619.90 A1.6 1.6 0 0 1 619.90 222.40 Z" fill="#fff"/><rect x="670.05" y="153.45" width="54.10" height="74.70" rx="2.6" fill="#13b4f2" stroke="#176fa8" stroke-width="0.9"/><rect x="673.30" y="222.40" width="47.2" height="3.2" rx="1.6" fill="#000"/><path d="M674.90 222.40 H712.20 V225.60 H674.90 A1.6 1.6 0 0 1 674.90 222.40 Z" fill="#fff"/><rect x="725.05" y="153.45" width="54.10" height="74.70" rx="2.6" fill="#13b4f2" stroke="#176fa8" stroke-width="0.9"/><rect x="728.30" y="222.40" width="47.2" height="3.2" rx="1.6" fill="#000"/><path d="M729.90 222.40 H767.20 V225.60 H729.90 A1.6 1.6 0 0 1 729.90 222.40 Z" fill="#fff"/><rect x="230.05" y="229.05" width="54.10" height="74.70" rx="2.6" fill="#13b4f2" stroke="#176fa8" stroke-width="0.9"/><rect x="233.30" y="298.00" width="47.2" height="3.2" rx="1.6" fill="#000"/><path d="M234.90 298.00 H272.20 V301.20 H234.90 A1.6 1.6 0 0 1 234.90 298.00 Z" fill="#fff"/><rect x="285.05" y="229.05" width="54.10" height="74.70" rx="2.6" fill="#13b4f2" stroke="#176fa8" stroke-width="0.9"/><rect x="288.30" y="298.00" width="47.2" height="3.2" rx="1.6" fill="#000"/><path d="M289.90 298.00 H327.20 V301.20 H289.90 A1.6 1.6 0 0 1 289.90 298.00 Z" fill="#fff"/><rect x="340.05" y="229.05" width="54.10" height="74.70" rx="2.6" fill="#13b4f2" stroke="#176fa8" stroke-width="0.9"/><rect x="343.30" y="298.00" width="47.2" height="3.2" rx="1.6" fill="#000"/><path d="M344.90 298.00 H382.20 V301.20 H344.90 A1.6 1.6 0 0 1 344.90 298.00 Z" fill="#fff"/><rect x="395.05" y="229.05" width="54.10" height="74.70" rx="2.6" fill="#13b4f2" stroke="#176fa8" stroke-width="0.9"/><rect x="398.30" y="298.00" width="47.2" height="3.2" rx="1.6" fill="#000"/><path d="M399.90 298.00 H437.20 V301.20 H399.90 A1.6 1.6 0 0 1 399.90 298.00 Z" fill="#fff"/><rect x="450.05" y="229.05" width="54.10" height="74.70" rx="2.6" fill="#13b4f2" stroke="#176fa8" stroke-width="0.9"/><rect x="453.30" y="298.00" width="47.2" height="3.2" rx="1.6" fill="#000"/><path d="M454.90 298.00 H492.20 V301.20 H454.90 A1.6 1.6 0 0 1 454.90 298.00 Z" fill="#fff"/><rect x="505.05" y="229.05" width="54.10" height="74.70" rx="2.6" fill="#13b4f2" stroke="#176fa8" stroke-width="0.9"/><rect x="508.30" y="298.00" width="47.2" height="3.2" rx="1.6" fill="#000"/><path d="M509.90 298.00 H547.20 V301.20 H509.90 A1.6 1.6 0 0 1 509.90 298.00 Z" fill="#fff"/><rect x="560.05" y="229.05" width="54.10" height="74.70" rx="2.6" fill="#13b4f2" stroke="#176fa8" stroke-width="0.9"/><rect x="563.30" y="298.00" width="47.2" height="3.2" rx="1.6" fill="#000"/><path d="M564.90 298.00 H602.20 V301.20 H564.90 A1.6 1.6 0 0 1 564.90 298.00 Z" fill="#fff"/><rect x="615.05" y="229.05" width="54.10" height="74.70" rx="2.6" fill="#13b4f2" stroke="#176fa8" stroke-width="0.9"/><rect x="618.30" y="298.00" width="47.2" height="3.2" rx="1.6" fill="#000"/><path d="M619.90 298.00 H657.20 V301.20 H619.90 A1.6 1.6 0 0 1 619.90 298.00 Z" fill="#fff"/><rect x="670.05" y="229.05" width="54.10" height="74.70" rx="2.6" fill="#13b4f2" stroke="#176fa8" stroke-width="0.9"/><rect x="673.30" y="298.00" width="47.2" height="3.2" rx="1.6" fill="#000"/><path d="M674.90 298.00 H712.20 V301.20 H674.90 A1.6 1.6 0 0 1 674.90 298.00 Z" fill="#fff"/><rect x="725.05" y="229.05" width="54.10" height="74.70" rx="2.6" fill="#13b4f2" stroke="#176fa8" stroke-width="0.9"/><rect x="728.30" y="298.00" width="47.2" height="3.2" rx="1.6" fill="#000"/><path d="M729.90 298.00 H767.20 V301.20 H729.90 A1.6 1.6 0 0 1 729.90 298.00 Z" fill="#fff"/><rect x="230.05" y="304.65" width="54.10" height="74.70" rx="2.6" fill="#13b4f2" stroke="#176fa8" stroke-width="0.9"/><rect x="233.30" y="373.60" width="47.2" height="3.2" rx="1.6" fill="#000"/><path d="M234.90 373.60 H272.20 V376.80 H234.90 A1.6 1.6 0 0 1 234.90 373.60 Z" fill="#fff"/><rect x="285.05" y="304.65" width="54.10" height="74.70" rx="2.6" fill="#13b4f2" stroke="#176fa8" stroke-width="0.9"/><rect x="288.30" y="373.60" width="47.2" height="3.2" rx="1.6" fill="#000"/><path d="M289.90 373.60 H327.20 V376.80 H289.90 A1.6 1.6 0 0 1 289.90 373.60 Z" fill="#fff"/><rect x="340.05" y="304.65" width="54.10" height="74.70" rx="2.6" fill="#13b4f2" stroke="#176fa8" stroke-width="0.9"/><rect x="343.30" y="373.60" width="47.2" height="3.2" rx="1.6" fill="#000"/><path d="M344.90 373.60 H382.20 V376.80 H344.90 A1.6 1.6 0 0 1 344.90 373.60 Z" fill="#fff"/><rect x="395.05" y="304.65" width="54.10" height="74.70" rx="2.6" fill="#13b4f2" stroke="#176fa8" stroke-width="0.9"/><rect x="398.30" y="373.60" width="47.2" height="3.2" rx="1.6" fill="#000"/><path d="M399.90 373.60 H437.20 V376.80 H399.90 A1.6 1.6 0 0 1 399.90 373.60 Z" fill="#fff"/><rect x="450.05" y="304.65" width="54.10" height="74.70" rx="2.6" fill="#13b4f2" stroke="#176fa8" stroke-width="0.9"/><rect x="453.30" y="373.60" width="47.2" height="3.2" rx="1.6" fill="#000"/><path d="M454.90 373.60 H492.20 V376.80 H454.90 A1.6 1.6 0 0 1 454.90 373.60 Z" fill="#fff"/><rect x="505.05" y="304.65" width="54.10" height="74.70" rx="2.6" fill="#13b4f2" stroke="#176fa8" stroke-width="0.9"/><rect x="508.30" y="373.60" width="47.2" height="3.2" rx="1.6" fill="#000"/><path d="M509.90 373.60 H547.20 V376.80 H509.90 A1.6 1.6 0 0 1 509.90 373.60 Z" fill="#fff"/><rect x="560.05" y="304.65" width="54.10" height="74.70" rx="2.6" fill="#13b4f2" stroke="#176fa8" stroke-width="0.9"/><rect x="563.30" y="373.60" width="47.2" height="3.2" rx="1.6" fill="#000"/><path d="M564.90 373.60 H602.20 V376.80 H564.90 A1.6 1.6 0 0 1 564.90 373.60 Z" fill="#fff"/><rect x="615.05" y="304.65" width="54.10" height="74.70" rx="2.6" fill="#13b4f2" stroke="#176fa8" stroke-width="0.9"/><rect x="618.30" y="373.60" width="47.2" height="3.2" rx="1.6" fill="#000"/><path d="M619.90 373.60 H657.20 V376.80 H619.90 A1.6 1.6 0 0 1 619.90 373.60 Z" fill="#fff"/><rect x="670.05" y="304.65" width="54.10" height="74.70" rx="2.6" fill="#13b4f2" stroke="#176fa8" stroke-width="0.9"/><rect x="673.30" y="373.60" width="47.2" height="3.2" rx="1.6" fill="#000"/><path d="M674.90 373.60 H712.20 V376.80 H674.90 A1.6 1.6 0 0 1 674.90 373.60 Z" fill="#fff"/><rect x="725.05" y="304.65" width="54.10" height="74.70" rx="2.6" fill="#13b4f2" stroke="#176fa8" stroke-width="0.9"/><rect x="728.30" y="373.60" width="47.2" height="3.2" rx="1.6" fill="#000"/><path d="M729.90 373.60 H767.20 V376.80 H729.90 A1.6 1.6 0 0 1 729.90 373.60 Z" fill="#fff"/><rect x="230.05" y="380.25" width="54.10" height="74.70" rx="2.6" fill="#13b4f2" stroke="#176fa8" stroke-width="0.9"/><rect x="233.30" y="449.20" width="47.2" height="3.2" rx="1.6" fill="#000"/><path d="M234.90 449.20 H272.20 V452.40 H234.90 A1.6 1.6 0 0 1 234.90 449.20 Z" fill="#fff"/><rect x="285.05" y="380.25" width="54.10" height="74.70" rx="2.6" fill="#13b4f2" stroke="#176fa8" stroke-width="0.9"/><rect x="288.30" y="449.20" width="47.2" height="3.2" rx="1.6" fill="#000"/><path d="M289.90 449.20 H327.20 V452.40 H289.90 A1.6 1.6 0 0 1 289.90 449.20 Z" fill="#fff"/><rect x="340.05" y="380.25" width="54.10" height="74.70" rx="2.6" fill="#13b4f2" stroke="#176fa8" stroke-width="0.9"/><rect x="343.30" y="449.20" width="47.2" height="3.2" rx="1.6" fill="#000"/><path d="M344.90 449.20 H382.20 V452.40 H344.90 A1.6 1.6 0 0 1 344.90 449.20 Z" fill="#fff"/><rect x="395.05" y="380.25" width="54.10" height="74.70" rx="2.6" fill="#13b4f2" stroke="#176fa8" stroke-width="0.9"/><rect x="398.30" y="449.20" width="47.2" height="3.2" rx="1.6" fill="#000"/><path d="M399.90 449.20 H437.20 V452.40 H399.90 A1.6 1.6 0 0 1 399.90 449.20 Z" fill="#fff"/><rect x="450.05" y="380.25" width="54.10" height="74.70" rx="2.6" fill="#13b4f2" stroke="#176fa8" stroke-width="0.9"/><rect x="453.30" y="449.20" width="47.2" height="3.2" rx="1.6" fill="#000"/><path d="M454.90 449.20 H492.20 V452.40 H454.90 A1.6 1.6 0 0 1 454.90 449.20 Z" fill="#fff"/><rect x="505.05" y="380.25" width="54.10" height="74.70" rx="2.6" fill="#13b4f2" stroke="#176fa8" stroke-width="0.9"/><rect x="508.30" y="449.20" width="47.2" height="3.2" rx="1.6" fill="#000"/><path d="M509.90 449.20 H547.20 V452.40 H509.90 A1.6 1.6 0 0 1 509.90 449.20 Z" fill="#fff"/><rect x="560.05" y="380.25" width="54.10" height="74.70" rx="2.6" fill="#13b4f2" stroke="#176fa8" stroke-width="0.9"/><rect x="563.30" y="449.20" width="47.2" height="3.2" rx="1.6" fill="#000"/><path d="M564.90 449.20 H602.20 V452.40 H564.90 A1.6 1.6 0 0 1 564.90 449.20 Z" fill="#fff"/><rect x="615.05" y="380.25" width="54.10" height="74.70" rx="2.6" fill="#13b4f2" stroke="#176fa8" stroke-width="0.9"/><rect x="618.30" y="449.20" width="47.2" height="3.2" rx="1.6" fill="#000"/><path d="M619.90 449.20 H657.20 V452.40 H619.90 A1.6 1.6 0 0 1 619.90 449.20 Z" fill="#fff"/><rect x="670.05" y="380.25" width="54.10" height="74.70" rx="2.6" fill="#13b4f2" stroke="#176fa8" stroke-width="0.9"/><rect x="673.30" y="449.20" width="47.2" height="3.2" rx="1.6" fill="#000"/><path d="M674.90 449.20 H712.20 V452.40 H674.90 A1.6 1.6 0 0 1 674.90 449.20 Z" fill="#fff"/><rect x="725.05" y="380.25" width="54.10" height="74.70" rx="2.6" fill="#13b4f2" stroke="#176fa8" stroke-width="0.9"/><rect x="728.30" y="449.20" width="47.2" height="3.2" rx="1.6" fill="#000"/><path d="M729.90 449.20 H767.20 V452.40 H729.90 A1.6 1.6 0 0 1 729.90 449.20 Z" fill="#fff"/><rect x="230.05" y="455.85" width="54.10" height="74.70" rx="2.6" fill="#13b4f2" stroke="#176fa8" stroke-width="0.9"/><rect x="233.30" y="524.80" width="47.2" height="3.2" rx="1.6" fill="#000"/><path d="M234.90 524.80 H272.20 V528.00 H234.90 A1.6 1.6 0 0 1 234.90 524.80 Z" fill="#fff"/><rect x="285.05" y="455.85" width="54.10" height="74.70" rx="2.6" fill="#13b4f2" stroke="#176fa8" stroke-width="0.9"/><rect x="288.30" y="524.80" width="47.2" height="3.2" rx="1.6" fill="#000"/><path d="M289.90 524.80 H327.20 V528.00 H289.90 A1.6 1.6 0 0 1 289.90 524.80 Z" fill="#fff"/><rect x="340.05" y="455.85" width="54.10" height="74.70" rx="2.6" fill="#13b4f2" stroke="#176fa8" stroke-width="0.9"/><rect x="343.30" y="524.80" width="47.2" height="3.2" rx="1.6" fill="#000"/><path d="M344.90 524.80 H382.20 V528.00 H344.90 A1.6 1.6 0 0 1 344.90 524.80 Z" fill="#fff"/><rect x="395.05" y="455.85" width="54.10" height="74.70" rx="2.6" fill="#13b4f2" stroke="#176fa8" stroke-width="0.9"/><rect x="398.30" y="524.80" width="47.2" height="3.2" rx="1.6" fill="#000"/><path d="M399.90 524.80 H437.20 V528.00 H399.90 A1.6 1.6 0 0 1 399.90 524.80 Z" fill="#fff"/><rect x="450.05" y="455.85" width="54.10" height="74.70" rx="2.6" fill="#13b4f2" stroke="#176fa8" stroke-width="0.9"/><rect x="453.30" y="524.80" width="47.2" height="3.2" rx="1.6" fill="#000"/><path d="M454.90 524.80 H492.20 V528.00 H454.90 A1.6 1.6 0 0 1 454.90 524.80 Z" fill="#fff"/><rect x="505.05" y="455.85" width="54.10" height="74.70" rx="2.6" fill="#13b4f2" stroke="#176fa8" stroke-width="0.9"/><rect x="508.30" y="524.80" width="47.2" height="3.2" rx="1.6" fill="#000"/><path d="M509.90 524.80 H547.20 V528.00 H509.90 A1.6 1.6 0 0 1 509.90 524.80 Z" fill="#fff"/><rect x="560.05" y="455.85" width="54.10" height="74.70" rx="2.6" fill="#13b4f2" stroke="#176fa8" stroke-width="0.9"/><rect x="563.30" y="524.80" width="47.2" height="3.2" rx="1.6" fill="#000"/><path d="M564.90 524.80 H602.20 V528.00 H564.90 A1.6 1.6 0 0 1 564.90 524.80 Z" fill="#fff"/><rect x="615.05" y="455.85" width="54.10" height="74.70" rx="2.6" fill="#13b4f2" stroke="#176fa8" stroke-width="0.9"/><rect x="618.30" y="524.80" width="47.2" height="3.2" rx="1.6" fill="#000"/><path d="M619.90 524.80 H657.20 V528.00 H619.90 A1.6 1.6 0 0 1 619.90 524.80 Z" fill="#fff"/><rect x="670.05" y="455.85" width="54.10" height="74.70" rx="2.6" fill="#13b4f2" stroke="#176fa8" stroke-width="0.9"/><rect x="673.30" y="524.80" width="47.2" height="3.2" rx="1.6" fill="#000"/><path d="M674.90 524.80 H712.20 V528.00 H674.90 A1.6 1.6 0 0 1 674.90 524.80 Z" fill="#fff"/><rect x="725.05" y="455.85" width="54.10" height="74.70" rx="2.6" fill="#13b4f2" stroke="#176fa8" stroke-width="0.9"/><rect x="728.30" y="524.80" width="47.2" height="3.2" rx="1.6" fill="#000"/><path d="M729.90 524.80 H767.20 V528.00 H729.90 A1.6 1.6 0 0 1 729.90 524.80 Z" fill="#fff"/><rect x="725.85" y="154.25" width="52.50" height="73.10" rx="2.5" fill="none" stroke="#ea1d25" stroke-width="2.5"/></svg>
<div class="lab" style="left:195px;top:184.8px;width:34px;height:12px;line-height:12px">L/R</div>
<div class="lab" style="left:195px;top:260.4px;width:34px;height:12px;line-height:12px">Bus 1</div>
<div class="lab" style="left:229.6px;top:256.6px;width:52.4px;height:12px;line-height:12px;text-align:right;font-size:9px">Post</div>
<div class="lab" style="left:284.6px;top:256.6px;width:52.4px;height:12px;line-height:12px;text-align:right;font-size:9px">Post</div>
<div class="lab" style="left:339.6px;top:256.6px;width:52.4px;height:12px;line-height:12px;text-align:right;font-size:9px">Post</div>
<div class="lab" style="left:394.6px;top:256.6px;width:52.4px;height:12px;line-height:12px;text-align:right;font-size:9px">Post</div>
<div class="lab" style="left:449.6px;top:256.6px;width:52.4px;height:12px;line-height:12px;text-align:right;font-size:9px">Post</div>
<div class="lab" style="left:504.6px;top:256.6px;width:52.4px;height:12px;line-height:12px;text-align:right;font-size:9px">Post</div>
<div class="lab" style="left:559.6px;top:256.6px;width:52.4px;height:12px;line-height:12px;text-align:right;font-size:9px">Post</div>
<div class="lab" style="left:614.6px;top:256.6px;width:52.4px;height:12px;line-height:12px;text-align:right;font-size:9px">Post</div>
<div class="lab" style="left:669.6px;top:256.6px;width:52.4px;height:12px;line-height:12px;text-align:right;font-size:9px">Post</div>
<div class="lab" style="left:724.6px;top:256.6px;width:52.4px;height:12px;line-height:12px;text-align:right;font-size:9px">Post</div>
<div class="lab" style="left:195px;top:336.0px;width:34px;height:12px;line-height:12px">Bus 2</div>
<div class="lab" style="left:229.6px;top:332.2px;width:52.4px;height:12px;line-height:12px;text-align:right;font-size:9px">Post</div>
<div class="lab" style="left:284.6px;top:332.2px;width:52.4px;height:12px;line-height:12px;text-align:right;font-size:9px">Post</div>
<div class="lab" style="left:339.6px;top:332.2px;width:52.4px;height:12px;line-height:12px;text-align:right;font-size:9px">Post</div>
<div class="lab" style="left:394.6px;top:332.2px;width:52.4px;height:12px;line-height:12px;text-align:right;font-size:9px">Post</div>
<div class="lab" style="left:449.6px;top:332.2px;width:52.4px;height:12px;line-height:12px;text-align:right;font-size:9px">Post</div>
<div class="lab" style="left:504.6px;top:332.2px;width:52.4px;height:12px;line-height:12px;text-align:right;font-size:9px">Post</div>
<div class="lab" style="left:559.6px;top:332.2px;width:52.4px;height:12px;line-height:12px;text-align:right;font-size:9px">Post</div>
<div class="lab" style="left:614.6px;top:332.2px;width:52.4px;height:12px;line-height:12px;text-align:right;font-size:9px">Post</div>
<div class="lab" style="left:669.6px;top:332.2px;width:52.4px;height:12px;line-height:12px;text-align:right;font-size:9px">Post</div>
<div class="lab" style="left:724.6px;top:332.2px;width:52.4px;height:12px;line-height:12px;text-align:right;font-size:9px">Post</div>
<div class="lab" style="left:195px;top:411.59999999999997px;width:34px;height:12px;line-height:12px">Bus 3</div>
<div class="lab" style="left:229.6px;top:407.79999999999995px;width:52.4px;height:12px;line-height:12px;text-align:right;font-size:9px">Post</div>
<div class="lab" style="left:284.6px;top:407.79999999999995px;width:52.4px;height:12px;line-height:12px;text-align:right;font-size:9px">Post</div>
<div class="lab" style="left:339.6px;top:407.79999999999995px;width:52.4px;height:12px;line-height:12px;text-align:right;font-size:9px">Post</div>
<div class="lab" style="left:394.6px;top:407.79999999999995px;width:52.4px;height:12px;line-height:12px;text-align:right;font-size:9px">Post</div>
<div class="lab" style="left:449.6px;top:407.79999999999995px;width:52.4px;height:12px;line-height:12px;text-align:right;font-size:9px">Post</div>
<div class="lab" style="left:504.6px;top:407.79999999999995px;width:52.4px;height:12px;line-height:12px;text-align:right;font-size:9px">Post</div>
<div class="lab" style="left:559.6px;top:407.79999999999995px;width:52.4px;height:12px;line-height:12px;text-align:right;font-size:9px">Post</div>
<div class="lab" style="left:614.6px;top:407.79999999999995px;width:52.4px;height:12px;line-height:12px;text-align:right;font-size:9px">Post</div>
<div class="lab" style="left:669.6px;top:407.79999999999995px;width:52.4px;height:12px;line-height:12px;text-align:right;font-size:9px">Post</div>
<div class="lab" style="left:724.6px;top:407.79999999999995px;width:52.4px;height:12px;line-height:12px;text-align:right;font-size:9px">Post</div>
<div class="lab" style="left:195px;top:487.2px;width:34px;height:12px;line-height:12px">Bus 4</div>
<div class="lab" style="left:229.6px;top:483.4px;width:52.4px;height:12px;line-height:12px;text-align:right;font-size:9px">Post</div>
<div class="lab" style="left:284.6px;top:483.4px;width:52.4px;height:12px;line-height:12px;text-align:right;font-size:9px">Post</div>
<div class="lab" style="left:339.6px;top:483.4px;width:52.4px;height:12px;line-height:12px;text-align:right;font-size:9px">Post</div>
<div class="lab" style="left:394.6px;top:483.4px;width:52.4px;height:12px;line-height:12px;text-align:right;font-size:9px">Post</div>
<div class="lab" style="left:449.6px;top:483.4px;width:52.4px;height:12px;line-height:12px;text-align:right;font-size:9px">Post</div>
<div class="lab" style="left:504.6px;top:483.4px;width:52.4px;height:12px;line-height:12px;text-align:right;font-size:9px">Post</div>
<div class="lab" style="left:559.6px;top:483.4px;width:52.4px;height:12px;line-height:12px;text-align:right;font-size:9px">Post</div>
<div class="lab" style="left:614.6px;top:483.4px;width:52.4px;height:12px;line-height:12px;text-align:right;font-size:9px">Post</div>
<div class="lab" style="left:669.6px;top:483.4px;width:52.4px;height:12px;line-height:12px;text-align:right;font-size:9px">Post</div>
<div class="lab" style="left:724.6px;top:483.4px;width:52.4px;height:12px;line-height:12px;text-align:right;font-size:9px">Post</div>
<div style="left:787.8px;top:107.6px;width:85.2px;height:430px;background:#c2c2c2;border:2px solid #2fd4f4;border-radius:4px"></div>
<div style="left:791px;top:113.9px;width:78.7px;height:36.9px;background:#878a88;border-radius:3px"></div>
<div class="t" style="left:791px;top:113.9px;width:78.7px;height:36.9px;line-height:36.9px;font-size:9px;color:#f4f4f4;text-align:center;">In 5</div>
<div class="btn" style="left:791.3px;top:157.5px;width:78.4px;height:22.2px;line-height:21.2px;font-size:9px;">Solo</div>
<div class="t" style="left:820px;top:185.3px;width:20px;height:10px;line-height:10px;font-size:7.5px;color:#2a2a2a;text-align:center;-webkit-text-stroke:0.1px #2a2a2a">C</div>
<div style="left:800px;top:197px;width:60px;height:9px;background:#000;border-radius:4.5px"></div>
<div style="left:825.8px;top:196.7px;width:9.2px;height:9px;background:#52c172;border-radius:4.6px/4.8px"></div>
<div style="left:797px;top:212.0px;width:25.5px;height:18.8px;background:#b7b7b7"></div>
<div class="t" style="left:797px;top:213.0px;width:25.5px;height:18.8px;line-height:18.8px;font-size:7.3px;color:#6e6e6e;text-align:center;">48V</div>
<div style="left:797px;top:232.55px;width:25.5px;height:18.8px;background:#b7b7b7"></div>
<div class="t" style="left:797px;top:233.55px;width:25.5px;height:18.8px;line-height:18.8px;font-size:7.3px;color:#6e6e6e;text-align:center;">Gate</div>
<div style="left:797px;top:253.1px;width:25.5px;height:18.8px;background:#b7b7b7"></div>
<div class="t" style="left:797px;top:254.1px;width:25.5px;height:18.8px;line-height:18.8px;font-size:7.3px;color:#6e6e6e;text-align:center;">FB</div>
<div style="left:797px;top:273.65px;width:25.5px;height:18.8px;background:#b7b7b7"></div>
<div class="t" style="left:797px;top:274.65px;width:25.5px;height:18.8px;line-height:18.8px;font-size:7.3px;color:#6e6e6e;text-align:center;">PEQ</div>
<div style="left:797px;top:294.2px;width:25.5px;height:18.8px;background:#b7b7b7"></div>
<div class="t" style="left:797px;top:295.2px;width:25.5px;height:18.8px;line-height:18.8px;font-size:7.3px;color:#6e6e6e;text-align:center;">Comp</div>
<div style="left:827.3px;top:212.2px;width:32.8px;height:17.1px;background:#fff;border:1px solid #c4c4c4;border-radius:2.5px;text-align:center;line-height:15.1px;font-size:8px;color:#333">0.0</div>
<div style="left:874.7px;top:76.2px;width:83.9px;height:461.4px;background:#c2c2c2;border-radius:4px"></div>
<div style="left:877.7px;top:113.7px;width:78.5px;height:37.3px;background:#878a88;border-radius:3px"></div>
<div class="t" style="left:877.7px;top:113.7px;width:78.5px;height:37.3px;line-height:37.3px;font-size:9px;color:#f4f4f4;text-align:center;">Master L/R</div>
<div class="btn" style="left:877.5px;top:157.5px;width:78.3px;height:22.2px;line-height:21.2px;font-size:9px;background:linear-gradient(#6ae28b,#5ad27b);border-color:#4fb56d">Solo</div>
<div style="left:883.3px;top:273.3px;width:25.9px;height:19.2px;background:#b7b7b7"></div>
<div class="t" style="left:883.3px;top:274.3px;width:25.9px;height:19.2px;line-height:19.2px;font-size:7.3px;color:#6e6e6e;text-align:center;">PEQ</div>
<div style="left:883.3px;top:294.1px;width:25.9px;height:19.2px;background:#b7b7b7"></div>
<div class="t" style="left:883.3px;top:295.1px;width:25.9px;height:19.2px;line-height:19.2px;font-size:7.3px;color:#6e6e6e;text-align:center;">Comp</div>
<div style="left:913.7px;top:211.7px;width:32.6px;height:17px;background:#fff;border:1px solid #b0b0b0;border-radius:2px;text-align:center;line-height:15px;font-size:8px;color:#333">0.0</div>
<div style="left:825.9px;top:255.45000000000002px;width:9px;height:1.7px;background:#111"></div><div style="left:842.8000000000001px;top:255.45000000000002px;width:9px;height:1.7px;background:#111"></div><div class="t" style="left:849px;top:251.0px;width:24px;height:10px;line-height:10px;font-size:6.8px;color:#222;text-align:center;">12</div><div style="left:825.9px;top:272.45px;width:9px;height:1.7px;background:#111"></div><div style="left:842.8000000000001px;top:272.45px;width:9px;height:1.7px;background:#111"></div><div class="t" style="left:849px;top:268.0px;width:24px;height:10px;line-height:10px;font-size:6.8px;color:#222;text-align:center;">9</div><div style="left:825.9px;top:289.45px;width:9px;height:1.7px;background:#111"></div><div style="left:842.8000000000001px;top:289.45px;width:9px;height:1.7px;background:#111"></div><div class="t" style="left:849px;top:285.0px;width:24px;height:10px;line-height:10px;font-size:6.8px;color:#222;text-align:center;">6</div><div style="left:825.9px;top:306.65px;width:9px;height:1.7px;background:#111"></div><div style="left:842.8000000000001px;top:306.65px;width:9px;height:1.7px;background:#111"></div><div class="t" style="left:849px;top:302.2px;width:24px;height:10px;line-height:10px;font-size:6.8px;color:#222;text-align:center;">3</div><div style="left:825.9px;top:324.15px;width:9px;height:1.7px;background:#111"></div><div style="left:842.8000000000001px;top:324.15px;width:9px;height:1.7px;background:#111"></div><div class="t" style="left:849px;top:319.7px;width:24px;height:10px;line-height:10px;font-size:6.8px;color:#222;text-align:center;">0</div><div style="left:825.9px;top:343.54999999999995px;width:9px;height:1.7px;background:#111"></div><div style="left:842.8000000000001px;top:343.54999999999995px;width:9px;height:1.7px;background:#111"></div><div class="t" style="left:849px;top:339.09999999999997px;width:24px;height:10px;line-height:10px;font-size:6.8px;color:#222;text-align:center;">-8</div><div style="left:825.9px;top:362.95px;width:9px;height:1.7px;background:#111"></div><div style="left:842.8000000000001px;top:362.95px;width:9px;height:1.7px;background:#111"></div><div class="t" style="left:849px;top:358.5px;width:24px;height:10px;line-height:10px;font-size:6.8px;color:#222;text-align:center;">-16</div><div style="left:825.9px;top:383.45px;width:9px;height:1.7px;background:#111"></div><div style="left:842.8000000000001px;top:383.45px;width:9px;height:1.7px;background:#111"></div><div class="t" style="left:849px;top:379.0px;width:24px;height:10px;line-height:10px;font-size:6.8px;color:#222;text-align:center;">-24</div><div style="left:825.9px;top:402.95px;width:9px;height:1.7px;background:#111"></div><div style="left:842.8000000000001px;top:402.95px;width:9px;height:1.7px;background:#111"></div><div class="t" style="left:849px;top:398.5px;width:24px;height:10px;line-height:10px;font-size:6.8px;color:#222;text-align:center;">-32</div><div style="left:825.9px;top:422.54999999999995px;width:9px;height:1.7px;background:#111"></div><div style="left:842.8000000000001px;top:422.54999999999995px;width:9px;height:1.7px;background:#111"></div><div class="t" style="left:849px;top:418.09999999999997px;width:24px;height:10px;line-height:10px;font-size:6.8px;color:#222;text-align:center;">-40</div><div style="left:825.9px;top:442.15px;width:9px;height:1.7px;background:#111"></div><div style="left:842.8000000000001px;top:442.15px;width:9px;height:1.7px;background:#111"></div><div class="t" style="left:849px;top:437.7px;width:24px;height:10px;line-height:10px;font-size:6.8px;color:#222;text-align:center;">-48</div><div style="left:825.9px;top:461.75px;width:9px;height:1.7px;background:#111"></div><div style="left:842.8000000000001px;top:461.75px;width:9px;height:1.7px;background:#111"></div><div class="t" style="left:849px;top:457.3px;width:24px;height:10px;line-height:10px;font-size:6.8px;color:#222;text-align:center;">-56</div><div style="left:836.7px;top:232.5px;width:4.8px;height:253.5px;background:#000;border-radius:2.4px"></div><svg style="left:827.9px;top:301.4px" width="24" height="49" viewBox="0 0 24 49">
<defs><linearGradient id="fka" x1="0" y1="0" x2="0" y2="1">
<stop offset="0" stop-color="#55595c"/><stop offset="0.15" stop-color="#5c6063"/><stop offset="0.3" stop-color="#777b7e"/><stop offset="0.45" stop-color="#a3a6a8"/><stop offset="0.6" stop-color="#c6c8c9"/><stop offset="0.78" stop-color="#dedfe0"/><stop offset="0.83" stop-color="#a9acae"/><stop offset="0.865" stop-color="#5e6265"/><stop offset="0.9" stop-color="#c1c3c4"/><stop offset="1" stop-color="#aaacae"/></linearGradient>
<linearGradient id="fca" x1="0" y1="0" x2="0" y2="1"><stop offset="0" stop-color="#ffffff"/><stop offset="1" stop-color="#e4e4e4"/></linearGradient></defs>
<path d="M0.6 2.5 Q0.6 0.5 2.6 0.5 H20.4 Q22.4 0.5 22.4 2.5 V44.5 Q22.4 47.5 19.4 47.5 H3.6 Q0.6 47.5 0.6 44.5 V38.5 Q7.7 31 1.2 23.7 Q7.7 16 0.6 7 Z" fill="url(#fka)" stroke="#4c4f52" stroke-width="0.8"/>
<g stroke="#ffffff" stroke-opacity="0.12" stroke-width="0.8"><path d="M5 12 H20"/><path d="M6 15.5 H20"/><path d="M5 19 H20"/><path d="M5 28 H20"/><path d="M6 31.5 H20"/><path d="M5 35 H20"/></g>
<rect x="19.6" y="7.5" width="2.4" height="32" fill="#b4b6b8" opacity="0.45"/>
<path d="M19.5 7.5 V40" stroke="#5c5f62" stroke-width="0.6"/>
<path d="M1 2.5 Q1 1 2.6 1 H20.4 Q22 1 22 2.5 V7.6 Q11.5 4.6 1 7.6 Z" fill="url(#fca)"/>
</svg>
<div style="left:912.3px;top:255.45000000000002px;width:9px;height:1.7px;background:#111"></div><div style="left:929.2px;top:255.45000000000002px;width:9px;height:1.7px;background:#111"></div><div class="t" style="left:934.8px;top:251.0px;width:24px;height:10px;line-height:10px;font-size:6.8px;color:#222;text-align:center;">12</div><div style="left:912.3px;top:272.45px;width:9px;height:1.7px;background:#111"></div><div style="left:929.2px;top:272.45px;width:9px;height:1.7px;background:#111"></div><div class="t" style="left:934.8px;top:268.0px;width:24px;height:10px;line-height:10px;font-size:6.8px;color:#222;text-align:center;">9</div><div style="left:912.3px;top:289.45px;width:9px;height:1.7px;background:#111"></div><div style="left:929.2px;top:289.45px;width:9px;height:1.7px;background:#111"></div><div class="t" style="left:934.8px;top:285.0px;width:24px;height:10px;line-height:10px;font-size:6.8px;color:#222;text-align:center;">6</div><div style="left:912.3px;top:306.65px;width:9px;height:1.7px;background:#111"></div><div style="left:929.2px;top:306.65px;width:9px;height:1.7px;background:#111"></div><div class="t" style="left:934.8px;top:302.2px;width:24px;height:10px;line-height:10px;font-size:6.8px;color:#222;text-align:center;">3</div><div style="left:912.3px;top:324.15px;width:9px;height:1.7px;background:#111"></div><div style="left:929.2px;top:324.15px;width:9px;height:1.7px;background:#111"></div><div class="t" style="left:934.8px;top:319.7px;width:24px;height:10px;line-height:10px;font-size:6.8px;color:#222;text-align:center;">0</div><div style="left:912.3px;top:343.54999999999995px;width:9px;height:1.7px;background:#111"></div><div style="left:929.2px;top:343.54999999999995px;width:9px;height:1.7px;background:#111"></div><div class="t" style="left:934.8px;top:339.09999999999997px;width:24px;height:10px;line-height:10px;font-size:6.8px;color:#222;text-align:center;">-8</div><div style="left:912.3px;top:362.95px;width:9px;height:1.7px;background:#111"></div><div style="left:929.2px;top:362.95px;width:9px;height:1.7px;background:#111"></div><div class="t" style="left:934.8px;top:358.5px;width:24px;height:10px;line-height:10px;font-size:6.8px;color:#222;text-align:center;">-16</div><div style="left:912.3px;top:383.45px;width:9px;height:1.7px;background:#111"></div><div style="left:929.2px;top:383.45px;width:9px;height:1.7px;background:#111"></div><div class="t" style="left:934.8px;top:379.0px;width:24px;height:10px;line-height:10px;font-size:6.8px;color:#222;text-align:center;">-24</div><div style="left:912.3px;top:402.95px;width:9px;height:1.7px;background:#111"></div><div style="left:929.2px;top:402.95px;width:9px;height:1.7px;background:#111"></div><div class="t" style="left:934.8px;top:398.5px;width:24px;height:10px;line-height:10px;font-size:6.8px;color:#222;text-align:center;">-32</div><div style="left:912.3px;top:422.54999999999995px;width:9px;height:1.7px;background:#111"></div><div style="left:929.2px;top:422.54999999999995px;width:9px;height:1.7px;background:#111"></div><div class="t" style="left:934.8px;top:418.09999999999997px;width:24px;height:10px;line-height:10px;font-size:6.8px;color:#222;text-align:center;">-40</div><div style="left:912.3px;top:442.15px;width:9px;height:1.7px;background:#111"></div><div style="left:929.2px;top:442.15px;width:9px;height:1.7px;background:#111"></div><div class="t" style="left:934.8px;top:437.7px;width:24px;height:10px;line-height:10px;font-size:6.8px;color:#222;text-align:center;">-48</div><div style="left:912.3px;top:461.75px;width:9px;height:1.7px;background:#111"></div><div style="left:929.2px;top:461.75px;width:9px;height:1.7px;background:#111"></div><div class="t" style="left:934.8px;top:457.3px;width:24px;height:10px;line-height:10px;font-size:6.8px;color:#222;text-align:center;">-56</div><div style="left:923.1px;top:232.5px;width:4.8px;height:253.5px;background:#000;border-radius:2.4px"></div><svg style="left:914.2px;top:301.4px" width="24" height="49" viewBox="0 0 24 49">
<defs><linearGradient id="fkb" x1="0" y1="0" x2="0" y2="1">
<stop offset="0" stop-color="#55595c"/><stop offset="0.15" stop-color="#5c6063"/><stop offset="0.3" stop-color="#777b7e"/><stop offset="0.45" stop-color="#a3a6a8"/><stop offset="0.6" stop-color="#c6c8c9"/><stop offset="0.78" stop-color="#dedfe0"/><stop offset="0.83" stop-color="#a9acae"/><stop offset="0.865" stop-color="#5e6265"/><stop offset="0.9" stop-color="#c1c3c4"/><stop offset="1" stop-color="#aaacae"/></linearGradient>
<linearGradient id="fcb" x1="0" y1="0" x2="0" y2="1"><stop offset="0" stop-color="#ffffff"/><stop offset="1" stop-color="#e4e4e4"/></linearGradient></defs>
<path d="M0.6 2.5 Q0.6 0.5 2.6 0.5 H20.4 Q22.4 0.5 22.4 2.5 V44.5 Q22.4 47.5 19.4 47.5 H3.6 Q0.6 47.5 0.6 44.5 V38.5 Q7.7 31 1.2 23.7 Q7.7 16 0.6 7 Z" fill="url(#fkb)" stroke="#4c4f52" stroke-width="0.8"/>
<g stroke="#ffffff" stroke-opacity="0.12" stroke-width="0.8"><path d="M5 12 H20"/><path d="M6 15.5 H20"/><path d="M5 19 H20"/><path d="M5 28 H20"/><path d="M6 31.5 H20"/><path d="M5 35 H20"/></g>
<rect x="19.6" y="7.5" width="2.4" height="32" fill="#b4b6b8" opacity="0.45"/>
<path d="M19.5 7.5 V40" stroke="#5c5f62" stroke-width="0.6"/>
<path d="M1 2.5 Q1 1 2.6 1 H20.4 Q22 1 22 2.5 V7.6 Q11.5 4.6 1 7.6 Z" fill="url(#fcb)"/>
</svg>
<div class="ml" style="left:795px;top:316.8px;width:30px;height:7px;line-height:7px">-60</div>
<svg style="left:800.8px;top:323.3px" width="19.2" height="156.0" viewBox="0 0 19.2 156.0"><rect x="0" y="0" width="18.20" height="155.00" fill="#000"/><rect x="0.5" y="1.20" width="17.20" height="2.30" fill="#6c6b32"/><rect x="0.5" y="5.04" width="17.20" height="2.30" fill="#6c6b32"/><rect x="0.5" y="8.89" width="17.20" height="2.30" fill="#6c6b32"/><rect x="0.5" y="12.73" width="17.20" height="2.30" fill="#6c6b32"/><rect x="0.5" y="16.58" width="17.20" height="2.30" fill="#6c6b32"/><rect x="0.5" y="20.43" width="17.20" height="2.30" fill="#6c6b32"/><rect x="0.5" y="24.27" width="17.20" height="2.30" fill="#6c6b32"/><rect x="0.5" y="28.12" width="17.20" height="2.30" fill="#6c6b32"/><rect x="0.5" y="31.96" width="17.20" height="2.30" fill="#6c6b32"/><rect x="0.5" y="35.81" width="17.20" height="2.30" fill="#6c6b32"/><rect x="0.5" y="39.65" width="17.20" height="2.30" fill="#6c6b32"/><rect x="0.5" y="43.50" width="17.20" height="2.30" fill="#2b6e31"/><rect x="0.5" y="47.34" width="17.20" height="2.30" fill="#2b6e31"/><rect x="0.5" y="51.19" width="17.20" height="2.30" fill="#2b6e31"/><rect x="0.5" y="55.03" width="17.20" height="2.30" fill="#2b6e31"/><rect x="0.5" y="58.88" width="17.20" height="2.30" fill="#2b6e31"/><rect x="0.5" y="62.72" width="17.20" height="2.30" fill="#2b6e31"/><rect x="0.5" y="66.57" width="17.20" height="2.30" fill="#2b6e31"/><rect x="0.5" y="70.41" width="17.20" height="2.30" fill="#2b6e31"/><rect x="0.5" y="74.26" width="17.20" height="2.30" fill="#2b6e31"/><rect x="0.5" y="78.10" width="17.20" height="2.30" fill="#2b6e31"/><rect x="0.5" y="81.95" width="17.20" height="2.30" fill="#2b6e31"/><rect x="0.5" y="85.79" width="17.20" height="2.30" fill="#2b6e31"/><rect x="0.5" y="89.64" width="17.20" height="2.30" fill="#2b6e31"/><rect x="0.5" y="93.48" width="17.20" height="2.30" fill="#2b6e31"/><rect x="0.5" y="97.33" width="17.20" height="2.30" fill="#2b6e31"/><rect x="0.5" y="101.17" width="17.20" height="2.30" fill="#2b6e31"/><rect x="0.5" y="105.02" width="17.20" height="2.30" fill="#2b6e31"/><rect x="0.5" y="108.86" width="17.20" height="2.30" fill="#2b6e31"/><rect x="0.5" y="112.71" width="17.20" height="2.30" fill="#2b6e31"/><rect x="0.5" y="116.55" width="17.20" height="2.30" fill="#2b6e31"/><rect x="0.5" y="120.40" width="17.20" height="2.30" fill="#2b6e31"/><rect x="0.5" y="124.24" width="17.20" height="2.30" fill="#2b6e31"/><rect x="0.5" y="128.09" width="17.20" height="2.30" fill="#2b6e31"/><rect x="0.5" y="131.93" width="17.20" height="2.30" fill="#2b6e31"/><rect x="0.5" y="135.78" width="17.20" height="2.30" fill="#2b6e31"/><rect x="0.5" y="139.62" width="17.20" height="2.30" fill="#2b6e31"/><rect x="0.5" y="143.47" width="17.20" height="2.30" fill="#2b6e31"/><rect x="0.5" y="147.31" width="17.20" height="2.30" fill="#2b6e31"/><rect x="0.5" y="151.16" width="17.20" height="2.30" fill="#2b6e31"/></svg>
<div style="left:800.8px;top:481px;width:18.2px;height:6.2px;background:#000"></div>
<div style="left:801.6px;top:481.8px;width:16.6px;height:4.6px;background:#2e6a33"></div>
<div class="ml" style="left:881px;top:317px;width:30px;height:7px;line-height:7px">-60/-60</div>
<svg style="left:887px;top:323.7px" width="19.0" height="164.0" viewBox="0 0 19.0 164.0"><rect x="0" y="0" width="18.00" height="163.00" fill="#000"/><rect x="0.5" y="1.20" width="17.00" height="2.40" fill="#6c6b32"/><rect x="0.5" y="5.25" width="17.00" height="2.40" fill="#6c6b32"/><rect x="0.5" y="9.29" width="17.00" height="2.40" fill="#6c6b32"/><rect x="0.5" y="13.33" width="17.00" height="2.40" fill="#6c6b32"/><rect x="0.5" y="17.38" width="17.00" height="2.40" fill="#6c6b32"/><rect x="0.5" y="21.43" width="17.00" height="2.40" fill="#6c6b32"/><rect x="0.5" y="25.47" width="17.00" height="2.40" fill="#6c6b32"/><rect x="0.5" y="29.51" width="17.00" height="2.40" fill="#6c6b32"/><rect x="0.5" y="33.56" width="17.00" height="2.40" fill="#6c6b32"/><rect x="0.5" y="37.61" width="17.00" height="2.40" fill="#6c6b32"/><rect x="0.5" y="41.65" width="17.00" height="2.40" fill="#6c6b32"/><rect x="0.5" y="45.70" width="17.00" height="2.40" fill="#2b6e31"/><rect x="0.5" y="49.74" width="17.00" height="2.40" fill="#2b6e31"/><rect x="0.5" y="53.79" width="17.00" height="2.40" fill="#2b6e31"/><rect x="0.5" y="57.83" width="17.00" height="2.40" fill="#2b6e31"/><rect x="0.5" y="61.88" width="17.00" height="2.40" fill="#2b6e31"/><rect x="0.5" y="65.92" width="17.00" height="2.40" fill="#2b6e31"/><rect x="0.5" y="69.97" width="17.00" height="2.40" fill="#2b6e31"/><rect x="0.5" y="74.01" width="17.00" height="2.40" fill="#2b6e31"/><rect x="0.5" y="78.06" width="17.00" height="2.40" fill="#2b6e31"/><rect x="0.5" y="82.10" width="17.00" height="2.40" fill="#2b6e31"/><rect x="0.5" y="86.14" width="17.00" height="2.40" fill="#2b6e31"/><rect x="0.5" y="90.19" width="17.00" height="2.40" fill="#2b6e31"/><rect x="0.5" y="94.23" width="17.00" height="2.40" fill="#2b6e31"/><rect x="0.5" y="98.28" width="17.00" height="2.40" fill="#2b6e31"/><rect x="0.5" y="102.33" width="17.00" height="2.40" fill="#2b6e31"/><rect x="0.5" y="106.37" width="17.00" height="2.40" fill="#2b6e31"/><rect x="0.5" y="110.42" width="17.00" height="2.40" fill="#2b6e31"/><rect x="0.5" y="114.46" width="17.00" height="2.40" fill="#2b6e31"/><rect x="0.5" y="118.50" width="17.00" height="2.40" fill="#2b6e31"/><rect x="0.5" y="122.55" width="17.00" height="2.40" fill="#2b6e31"/><rect x="0.5" y="126.59" width="17.00" height="2.40" fill="#2b6e31"/><rect x="0.5" y="130.64" width="17.00" height="2.40" fill="#2b6e31"/><rect x="0.5" y="134.68" width="17.00" height="2.40" fill="#2b6e31"/><rect x="0.5" y="138.73" width="17.00" height="2.40" fill="#2b6e31"/><rect x="0.5" y="142.77" width="17.00" height="2.40" fill="#2b6e31"/><rect x="0.5" y="146.82" width="17.00" height="2.40" fill="#2b6e31"/><rect x="0.5" y="150.86" width="17.00" height="2.40" fill="#2b6e31"/><rect x="0.5" y="154.91" width="17.00" height="2.40" fill="#2b6e31"/><rect x="0.5" y="158.95" width="17.00" height="2.40" fill="#2b6e31"/><rect x="8.50" y="0" width="1" height="163.00" fill="#000"/></svg>
<div class="btn" style="left:791.3px;top:493px;width:78.4px;height:22px;line-height:21px;font-size:9px;">Mute</div>
<div class="t" style="left:791px;top:520.5px;width:78.7px;height:12px;line-height:12px;font-size:9.5px;color:#1e1e1e;text-align:center;-webkit-text-stroke:0.12px #141414">IN 5</div>
<div class="btn" style="left:877.9px;top:493px;width:77.6px;height:22px;line-height:21px;font-size:9px;">Mute</div>
<div class="t" style="left:877.9px;top:520.5px;width:77.6px;height:12px;line-height:12px;font-size:9px;color:#1e1e1e;text-align:center;-webkit-text-stroke:0.12px #141414">Master L/R</div>
</body></html>
